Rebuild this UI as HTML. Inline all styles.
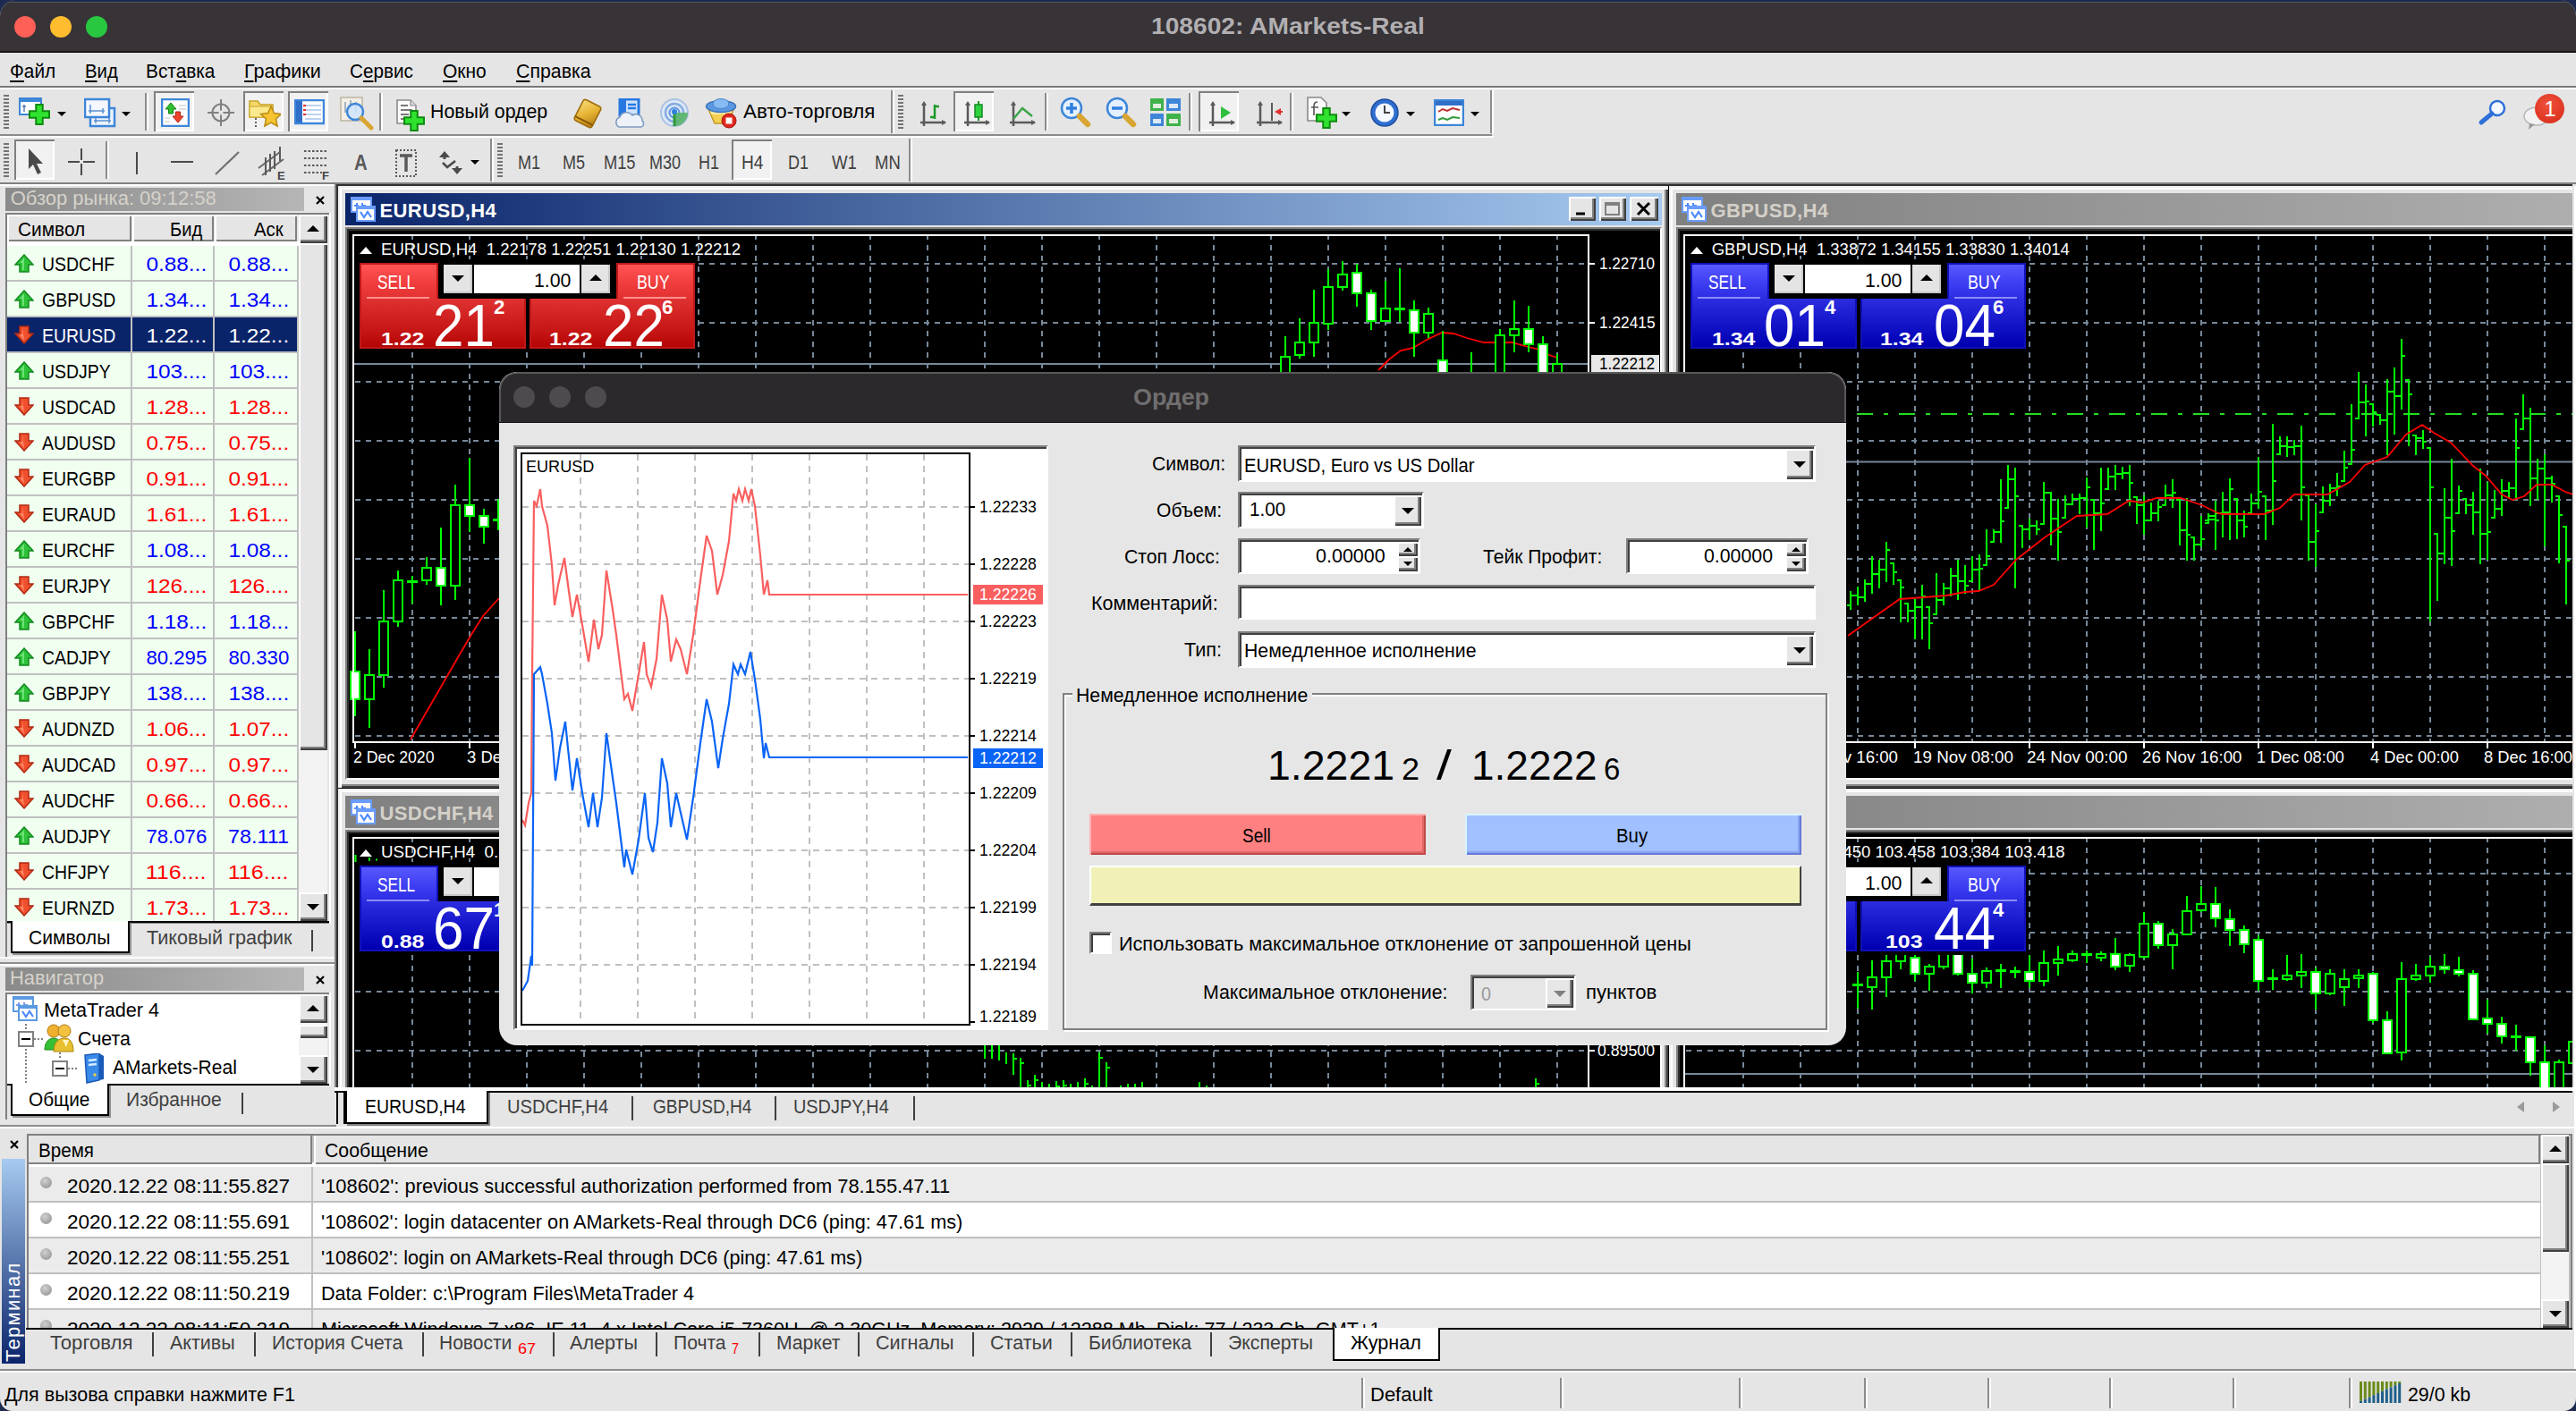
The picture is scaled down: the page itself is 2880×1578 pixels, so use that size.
<!DOCTYPE html>
<html><head><meta charset="utf-8"><title>108602: AMarkets-Real</title>
<style>
html,body{margin:0;padding:0;}
body{width:2880px;height:1578px;background:#1c2a50;overflow:hidden;font-family:"Liberation Sans",sans-serif;}
#win{position:absolute;left:0;top:0;width:2880px;height:1578px;background:#e5e5e5;border-radius:18px 18px 14px 14px;overflow:hidden;}
#win div,#win span.t,#win svg{position:absolute;box-sizing:border-box;}
span.t{white-space:pre;}
</style></head><body><div id="win">
<div style="left:0px;top:0px;width:2880px;height:57px;background:#373337;"></div>
<div style="left:0px;top:0px;width:2880px;height:2px;background:#1c2a50;"></div>
<div style="left:0px;top:2px;width:2880px;height:1px;background:#5a585a;"></div>
<div style="left:0px;top:57px;width:2880px;height:2px;background:#161416;"></div>
<div style="left:16px;top:18px;width:24px;height:24px;background:#fe5f57;border-radius:50%;"></div>
<div style="left:56px;top:18px;width:24px;height:24px;background:#febc2e;border-radius:50%;"></div>
<div style="left:96px;top:18px;width:24px;height:24px;background:#28c840;border-radius:50%;"></div>
<span class="t" style="top:15.5px;font-size:26px;line-height:26px;color:#b1afb1;font-weight:bold;transform:scaleX(1.083);transform-origin:0 0;left:1286.6px;">108602: AMarkets-Real</span>
<span class="t" style="top:69.4px;font-size:22px;line-height:22px;color:#000;transform:scaleX(0.947);transform-origin:0 0;left:11.2px;text-underline-offset:3px;"><u>Ф</u>айл</span>
<span class="t" style="top:69.4px;font-size:22px;line-height:22px;color:#000;transform:scaleX(0.923);transform-origin:0 0;left:95.0px;text-underline-offset:3px;"><u>В</u>ид</span>
<span class="t" style="top:69.4px;font-size:22px;line-height:22px;color:#000;transform:scaleX(0.947);transform-origin:0 0;left:163.0px;text-underline-offset:3px;">Вст<u>а</u>вка</span>
<span class="t" style="top:69.4px;font-size:22px;line-height:22px;color:#000;transform:scaleX(0.981);transform-origin:0 0;left:273.0px;text-underline-offset:3px;"><u>Г</u>рафики</span>
<span class="t" style="top:69.4px;font-size:22px;line-height:22px;color:#000;transform:scaleX(0.939);transform-origin:0 0;left:391.2px;text-underline-offset:3px;">С<u>е</u>рвис</span>
<span class="t" style="top:69.4px;font-size:22px;line-height:22px;color:#000;transform:scaleX(0.953);transform-origin:0 0;left:495.0px;text-underline-offset:3px;"><u>О</u>кно</span>
<span class="t" style="top:69.4px;font-size:22px;line-height:22px;color:#000;transform:scaleX(0.969);transform-origin:0 0;left:577.0px;text-underline-offset:3px;"><u>С</u>правка</span>
<div style="left:0px;top:96px;width:2880px;height:2px;background:#787878;"></div>
<div style="left:0px;top:98px;width:2880px;height:2px;background:#fff;"></div>
<div style="left:0px;top:150px;width:1668px;height:2px;background:#8a8a8a;"></div>
<div style="left:0px;top:152px;width:1670px;height:2px;background:#fff;"></div>
<div style="left:0px;top:204px;width:2880px;height:2px;background:#808080;"></div>
<div style="left:0px;top:206px;width:374px;height:2px;background:#fff;"></div>
<div style="left:4px;top:106px;width:6px;height:38px;background:repeating-linear-gradient(to bottom,#737373 0 2px,transparent 2px 4px);"></div>
<div style="left:996px;top:101px;width:2px;height:48px;background:#8c8c8c;"></div>
<div style="left:998px;top:101px;width:2px;height:48px;background:#fff;"></div>
<div style="left:1666px;top:101px;width:2px;height:48px;background:#8c8c8c;"></div>
<div style="left:1668px;top:101px;width:2px;height:48px;background:#fff;"></div>
<div style="left:1004px;top:106px;width:6px;height:38px;background:repeating-linear-gradient(to bottom,#737373 0 2px,transparent 2px 4px);"></div>
<svg style="left:21px;top:109px;" width="36" height="32" viewBox="0 0 36 32"><rect x="1" y="1" width="24" height="18" fill="#fff" stroke="#3d86d8" stroke-width="2"/><rect x="1" y="1" width="24" height="4" fill="#3d86d8"/><path d="M6 8v8M4 10h4" stroke="#5a7fb0" stroke-width="1.5"/><path d="M23 7v24M11 19h24" stroke="#0f8a0f" stroke-width="9.5"/><path d="M23 9v20M13 19h20" stroke="#2fe22f" stroke-width="5.5"/></svg>
<svg style="left:64px;top:124.5px;" width="10" height="6" viewBox="0 0 10 6"><path d="M0 0H10L5 5Z" fill="#000"/></svg>
<svg style="left:94px;top:109px;" width="36" height="34" viewBox="0 0 36 34"><rect x="7" y="12" width="27" height="20" fill="#eef4fc" stroke="#3d86d8" stroke-width="2.5"/><path d="M11 26h19M13 23v6M28 23v6" stroke="#5a8fd0" stroke-width="1.5"/><rect x="1" y="2" width="27" height="20" fill="#f4f8fe" stroke="#3d86d8" stroke-width="2.5"/><path d="M5 15h18M7 8v10M21 12v6" stroke="#5a8fd0" stroke-width="1.5"/></svg>
<svg style="left:136px;top:124.5px;" width="10" height="6" viewBox="0 0 10 6"><path d="M0 0H10L5 5Z" fill="#000"/></svg>
<div style="left:162px;top:104px;width:2px;height:42px;background:#8c8c8c;"></div>
<div style="left:164px;top:104px;width:2px;height:42px;background:#fff;"></div>
<div style="left:172px;top:102px;width:45px;height:45px;background:#f1f1f1;box-shadow:inset 2px 2px 0 #808080, inset -2px -2px 0 #fff;"></div>
<svg style="left:180px;top:110px;" width="32" height="32" viewBox="0 0 32 32"><rect x="1" y="1" width="30" height="30" fill="#fdfdfd" stroke="#3d86d8" stroke-width="2.5"/><path d="M11 5l-6 7h3.5v5h5v-5H17z" fill="#2fbf2f" stroke="#128012" stroke-width="1"/><path d="M19 27l-6-7h3.5v-5h5v5H25z" fill="#f0442a" stroke="#b02010" stroke-width="1"/><path d="M20 8h8M20 12h8M4 22h6M4 26h6" stroke="#d8d8d8" stroke-width="1.5"/></svg>
<svg style="left:232px;top:111px;" width="30" height="30" viewBox="0 0 30 30"><circle cx="15" cy="15" r="9.5" fill="none" stroke="#808080" stroke-width="2.2"/><path d="M15 0v30M0 15h30" stroke="#808080" stroke-width="2"/><circle cx="15" cy="15" r="2.5" fill="#e5e5e5"/></svg>
<div style="left:272px;top:102px;width:45px;height:45px;background:#f1f1f1;box-shadow:inset 2px 2px 0 #808080, inset -2px -2px 0 #fff;"></div>
<svg style="left:278px;top:107px;" width="36" height="36" viewBox="0 0 36 36"><path d="M1 6h9l3 4h14v14H1z" fill="#f4d96a" stroke="#c9a227" stroke-width="1.5"/><path d="M1 12h26v12H1z" fill="#fbe98e" stroke="#c9a227" stroke-width="1"/><path d="M8 25v10" stroke="#333" stroke-width="1.5" stroke-dasharray="2 2"/><path d="M25 12l3.5 7.5 8 1-6 5.5 1.6 8L25 30l-7.1 4 1.6-8-6-5.5 8-1z" fill="#f6c431" stroke="#b98a12" stroke-width="1.5"/></svg>
<div style="left:322px;top:102px;width:45px;height:45px;background:#f1f1f1;box-shadow:inset 2px 2px 0 #808080, inset -2px -2px 0 #fff;"></div>
<svg style="left:329px;top:111px;" width="34" height="30" viewBox="0 0 34 30"><rect x="1" y="1" width="32" height="26" fill="#fff" stroke="#3d86d8" stroke-width="2.5"/><rect x="2" y="2" width="7" height="24" fill="#2f6fc8"/><path d="M12 7h18M12 12h18M12 17h18M12 22h18" stroke="#a9c4ec" stroke-width="1.5"/><path d="M10 7h3M10 12h3M10 17h3" stroke="#e03030" stroke-width="2"/></svg>
<svg style="left:380px;top:108px;" width="38" height="38" viewBox="0 0 38 38"><rect x="1" y="1" width="24" height="26" fill="#f3efe6" stroke="#bdb5a2" stroke-width="1.5"/><path d="M6 6v12M12 4v10M18 6v12" stroke="#8aa0b8" stroke-width="1.5"/><circle cx="17" cy="17" r="9" fill="#cfe4fb" fill-opacity=".85" stroke="#3d86d8" stroke-width="2.5"/><path d="M24 24l11 11" stroke="#d9a532" stroke-width="5" stroke-linecap="round"/></svg>
<div style="left:424px;top:104px;width:2px;height:42px;background:#8c8c8c;"></div>
<div style="left:426px;top:104px;width:2px;height:42px;background:#fff;"></div>
<svg style="left:443px;top:109px;" width="36" height="38" viewBox="0 0 36 38"><path d="M1 3h15l6 6v20H1z" fill="#fbfbfb" stroke="#8a8a8a" stroke-width="1.6"/><path d="M16 3v6h6" fill="#ddd" stroke="#8a8a8a" stroke-width="1.2"/><path d="M5 9h8M5 14h13M5 19h9M5 24h6" stroke="#7a7a7a" stroke-width="2.2"/><path d="M20 14v24M8 26h24" stroke="#0f8a0f" stroke-width="9.5"/><path d="M20 16v20M10 26h20" stroke="#2fe22f" stroke-width="5.5"/></svg>
<span class="t" style="top:114.4px;font-size:22px;line-height:22px;color:#000;transform:scaleX(0.970);transform-origin:0 0;left:481.2px;">Новый ордер</span>
<svg style="left:640px;top:110px;" width="36" height="34" viewBox="0 0 36 34"><defs><linearGradient id="gg" x1="0" y1="0" x2="1" y2="1"><stop offset="0" stop-color="#f7dc7a"/><stop offset=".5" stop-color="#e6b435"/><stop offset="1" stop-color="#b27a10"/></linearGradient></defs><g transform="translate(17,17) rotate(27)"><rect x="-11" y="-13" width="22" height="26" rx="3" fill="url(#gg)" stroke="#a06c0e" stroke-width="1.6"/><path d="M-11 9l22 0" stroke="#8a5c08" stroke-width="2"/></g></svg>
<svg style="left:687px;top:110px;" width="36" height="34" viewBox="0 0 36 34"><rect x="6" y="1" width="21" height="18" fill="#cfe4ff" stroke="#2878e0" stroke-width="3"/><rect x="6" y="1" width="7" height="18" fill="#2878e0"/><path d="M15 7h9M15 11h9" stroke="#2878e0" stroke-width="2.4"/><path d="M5 32a6 6 0 0 1 1-11 8 8 0 0 1 14-2 7 7 0 0 1 11 6 4 4 0 0 1-1 7z" fill="#edf2f8" stroke="#7f9cc0" stroke-width="1.6"/></svg>
<svg style="left:737px;top:109px;" width="36" height="34" viewBox="0 0 36 34"><circle cx="17" cy="17" r="15" fill="#dfe9f6" stroke="#a9c2e4" stroke-width="2"/><circle cx="17" cy="17" r="10" fill="none" stroke="#86aee2" stroke-width="2.5"/><circle cx="17" cy="17" r="5.5" fill="none" stroke="#5a94e0" stroke-width="2"/><path d="M18 17h14a15 15 0 0 1-14 15z" fill="#58b468" fill-opacity=".9"/><path d="M17 17v15" stroke="#2c9a3a" stroke-width="3"/><circle cx="17" cy="16" r="3" fill="#2f7fe0"/></svg>
<svg style="left:789px;top:109px;" width="38" height="36" viewBox="0 0 38 36"><path d="M3 13h28l-5 16H10z" fill="#f3d052" stroke="#c59a20" stroke-width="1.5"/><path d="M5 15h24l-1 4H6z" fill="#fbe9a0"/><ellipse cx="17" cy="10" rx="16.5" ry="6.5" fill="#5a98e2" stroke="#3a70b8" stroke-width="1.5"/><ellipse cx="17" cy="7" rx="9" ry="5.5" fill="#86bbf4" stroke="#4a84cc" stroke-width="1"/><circle cx="26" cy="26" r="8" fill="#e0281e" stroke="#a81810" stroke-width="1"/><rect x="22.5" y="22.5" width="7" height="7" fill="#fff"/></svg>
<span class="t" style="top:114.4px;font-size:22px;line-height:22px;color:#000;transform:scaleX(1.015);transform-origin:0 0;left:831.2px;">Авто-торговля</span>
<svg style="left:1028px;top:113px;" width="32" height="30" viewBox="0 0 32 30"><path d="M5 2v26M1 24h28" stroke="#5a5a5a" stroke-width="2.5" fill="none"/><path d="M5 0l-3 5h6zM30 24l-5-3v6z" fill="#5a5a5a"/><path d="M17 4v16M17 6h5M12 18h5" stroke="#1a9a2a" stroke-width="2.5" fill="none"/></svg>
<div style="left:1066px;top:102px;width:45px;height:45px;background:#f1f1f1;box-shadow:inset 2px 2px 0 #808080, inset -2px -2px 0 #fff;"></div>
<svg style="left:1077px;top:113px;" width="32" height="30" viewBox="0 0 32 30"><path d="M5 2v26M1 24h28" stroke="#5a5a5a" stroke-width="2.5" fill="none"/><path d="M5 0l-3 5h6zM30 24l-5-3v6z" fill="#5a5a5a"/><path d="M17 0v22" stroke="#1a9a2a" stroke-width="2"/><rect x="13" y="4" width="8" height="14" fill="#2fd03f" stroke="#128a22" stroke-width="1.5"/></svg>
<svg style="left:1128px;top:113px;" width="32" height="30" viewBox="0 0 32 30"><path d="M5 2v26M1 24h28" stroke="#5a5a5a" stroke-width="2.5" fill="none"/><path d="M5 0l-3 5h6zM30 24l-5-3v6z" fill="#5a5a5a"/><path d="M5 20l10-12 11 9" stroke="#3aa64a" stroke-width="2.5" fill="none"/></svg>
<div style="left:1168px;top:104px;width:2px;height:42px;background:#8c8c8c;"></div>
<div style="left:1170px;top:104px;width:2px;height:42px;background:#fff;"></div>
<svg style="left:1185px;top:108px;" width="36" height="36" viewBox="0 0 36 36"><circle cx="13" cy="13" r="11" fill="#e4f0ff" stroke="#3d86d8" stroke-width="2.5"/><path d="M7 13h12" stroke="#2f7fe0" stroke-width="3.5"/><path d="M13 7v12" stroke="#2f7fe0" stroke-width="3.5"/><path d="M22 22l9 9" stroke="#d9a532" stroke-width="6.5" stroke-linecap="round"/></svg>
<svg style="left:1236px;top:108px;" width="36" height="36" viewBox="0 0 36 36"><circle cx="13" cy="13" r="11" fill="#e4f0ff" stroke="#3d86d8" stroke-width="2.5"/><path d="M7 13h12" stroke="#2f7fe0" stroke-width="3.5"/><path d="M22 22l9 9" stroke="#d9a532" stroke-width="6.5" stroke-linecap="round"/></svg>
<svg style="left:1286px;top:110px;" width="34" height="32" viewBox="0 0 34 32"><rect x="0" y="0" width="15" height="14" fill="#3fb24a"/><rect x="18" y="0" width="16" height="14" fill="#3d86d8"/><rect x="0" y="17" width="15" height="14" fill="#3d86d8"/><rect x="18" y="17" width="16" height="14" fill="#3fb24a"/><rect x="3" y="6" width="9" height="5" fill="#dff0df"/><rect x="21" y="6" width="10" height="5" fill="#dce9fb"/><rect x="3" y="23" width="9" height="5" fill="#dce9fb"/><rect x="21" y="23" width="10" height="5" fill="#dff0df"/></svg>
<div style="left:1329px;top:104px;width:2px;height:42px;background:#8c8c8c;"></div>
<div style="left:1331px;top:104px;width:2px;height:42px;background:#fff;"></div>
<div style="left:1340px;top:102px;width:45px;height:45px;background:#f1f1f1;box-shadow:inset 2px 2px 0 #808080, inset -2px -2px 0 #fff;"></div>
<svg style="left:1351px;top:113px;" width="32" height="30" viewBox="0 0 32 30"><path d="M5 2v26M1 24h28" stroke="#5a5a5a" stroke-width="2.5" fill="none"/><path d="M5 0l-3 5h6zM30 24l-5-3v6z" fill="#5a5a5a"/><path d="M14 6v14l11-7z" fill="#2fbf3f"/></svg>
<svg style="left:1404px;top:113px;" width="32" height="30" viewBox="0 0 32 30"><path d="M5 2v26M1 24h28" stroke="#5a5a5a" stroke-width="2.5" fill="none"/><path d="M5 0l-3 5h6zM30 24l-5-3v6z" fill="#5a5a5a"/><path d="M18 2v20" stroke="#5a5a5a" stroke-width="2"/><path d="M21 12l7-4v8z" fill="#e03030"/><path d="M24 12h6" stroke="#e03030" stroke-width="2"/></svg>
<div style="left:1442px;top:104px;width:2px;height:42px;background:#8c8c8c;"></div>
<div style="left:1444px;top:104px;width:2px;height:42px;background:#fff;"></div>
<svg style="left:1461px;top:108px;" width="36" height="38" viewBox="0 0 36 38"><path d="M1 1h15l6 6v20H1z" fill="#fbfbfb" stroke="#8a8a8a" stroke-width="1.6"/><path d="M12 6c-4 0-4 3-4 6v9M5 12h8" stroke="#555" stroke-width="1.6" fill="none"/><path d="M22 12v24M10 24h24" stroke="#0f8a0f" stroke-width="9.5"/><path d="M22 14v20M12 24h20" stroke="#2fe22f" stroke-width="5.5"/></svg>
<svg style="left:1500px;top:124.5px;" width="10" height="6" viewBox="0 0 10 6"><path d="M0 0H10L5 5Z" fill="#000"/></svg>
<svg style="left:1531px;top:109px;" width="34" height="34" viewBox="0 0 34 34"><circle cx="17" cy="17" r="15" fill="#2f6fd0" stroke="#1d4fa0" stroke-width="1.5"/><circle cx="17" cy="17" r="10.5" fill="#f4f8ff"/><path d="M17 9v8h6" stroke="#444" stroke-width="2" fill="none"/></svg>
<svg style="left:1572px;top:124.5px;" width="10" height="6" viewBox="0 0 10 6"><path d="M0 0H10L5 5Z" fill="#000"/></svg>
<svg style="left:1603px;top:111px;" width="34" height="30" viewBox="0 0 34 30"><rect x="1" y="1" width="32" height="28" fill="#fff" stroke="#3d86d8" stroke-width="2.5"/><rect x="2" y="2" width="30" height="5" fill="#2f6fc8"/><path d="M5 14l5-3 5 2 6-3 8 2" stroke="#c03030" stroke-width="2" fill="none"/><path d="M5 23l5-2 5 2 6-3 8 1" stroke="#2f9a3a" stroke-width="2" fill="none"/></svg>
<svg style="left:1644px;top:124.5px;" width="10" height="6" viewBox="0 0 10 6"><path d="M0 0H10L5 5Z" fill="#000"/></svg>
<svg style="left:2770px;top:110px;" width="34" height="32" viewBox="0 0 34 32"><circle cx="22" cy="11" r="8" fill="#f4f8ff" stroke="#2f6fd8" stroke-width="2.5"/><path d="M16 17L4 27" stroke="#2f6fd8" stroke-width="5" stroke-linecap="round"/></svg>
<svg style="left:2820px;top:118px;" width="36" height="30" viewBox="0 0 36 30"><ellipse cx="16" cy="12" rx="14" ry="10" fill="#f2f2f2" stroke="#b8b8b8" stroke-width="1.5"/><path d="M8 20l-1 7 7-6z" fill="#9a9a9a"/></svg>
<div style="left:2834px;top:105px;width:33px;height:33px;background:radial-gradient(circle at 45% 35%,#f0523c,#d42a18);border-radius:50%;"></div>
<span class="t" style="top:110.2px;font-size:24px;line-height:24px;color:#fff;transform:scaleX(0.980);transform-origin:50% 0;left:2450.5px;width:800px;text-align:center;">1</span>
<div style="left:4px;top:160px;width:6px;height:38px;background:repeating-linear-gradient(to bottom,#737373 0 2px,transparent 2px 4px);"></div>
<div style="left:16px;top:156px;width:45px;height:45px;background:#f1f1f1;box-shadow:inset 2px 2px 0 #808080, inset -2px -2px 0 #fff;"></div>
<svg style="left:30px;top:166px;" width="22" height="30" viewBox="0 0 22 30"><path d="M2 0v23l5-5 5 11 4-2-5-10h7z" fill="#4a4a4a"/></svg>
<svg style="left:76px;top:166px;" width="30" height="30" viewBox="0 0 30 30"><path d="M15 0v30M0 15h30" stroke="#4a4a4a" stroke-width="2"/><rect x="13" y="13" width="4" height="4" fill="#e5e5e5"/></svg>
<div style="left:118px;top:158px;width:2px;height:42px;background:#8c8c8c;"></div>
<div style="left:120px;top:158px;width:2px;height:42px;background:#fff;"></div>
<div style="left:152px;top:170px;width:2px;height:25px;background:#4a4a4a;"></div>
<div style="left:191px;top:180px;width:25px;height:2px;background:#4a4a4a;"></div>
<svg style="left:240px;top:168px;" width="28" height="28" viewBox="0 0 28 28"><path d="M1 27L27 2" stroke="#707070" stroke-width="2.2"/></svg>
<svg style="left:287px;top:164px;" width="34" height="38" viewBox="0 0 34 38"><path d="M2 24L26 6M6 32L30 14" stroke="#6a6a6a" stroke-width="2"/><path d="M10 12v20M15 8v20M20 5v20M26 0v16" stroke="#5a5a5a" stroke-width="2"/><text x="23" y="37" font-size="13" font-weight="bold" fill="#444" font-family="Liberation Sans">E</text></svg>
<svg style="left:340px;top:166px;" width="32" height="36" viewBox="0 0 32 36"><path d="M0 3h26M0 11h26M0 19h26M0 27h20" stroke="#5a5a5a" stroke-width="2" stroke-dasharray="2.5 2"/><text x="20" y="35" font-size="13" font-weight="bold" fill="#444" font-family="Liberation Sans">F</text></svg>
<span class="t" style="top:171.0px;font-size:23px;line-height:23px;color:#5a5a5a;font-weight:bold;transform:scaleX(0.885);transform-origin:0 0;left:396.0px;">A</span>
<svg style="left:441px;top:165px;" width="26" height="34" viewBox="0 0 26 34"><rect x="2" y="3" width="22" height="29" fill="none" stroke="#5a5a5a" stroke-width="2" stroke-dasharray="2 2"/><path d="M6 9h14M13 9v18" stroke="#5a5a5a" stroke-width="3.5"/></svg>
<svg style="left:489px;top:168px;" width="32" height="28" viewBox="0 0 32 28"><path d="M8 1l6 7H2zM22 27l-6-7h12z" fill="#4a4a4a"/><path d="M8 8v2M22 20v-2" stroke="#4a4a4a" stroke-width="3"/><path d="M6 14l5 5 9-7" stroke="#4a4a4a" stroke-width="2.6" fill="none"/></svg>
<svg style="left:526px;top:178.5px;" width="10" height="6" viewBox="0 0 10 6"><path d="M0 0H10L5 5Z" fill="#000"/></svg>
<div style="left:548px;top:155px;width:2px;height:48px;background:#8c8c8c;"></div>
<div style="left:550px;top:155px;width:2px;height:48px;background:#fff;"></div>
<div style="left:556px;top:160px;width:6px;height:38px;background:repeating-linear-gradient(to bottom,#737373 0 2px,transparent 2px 4px);"></div>
<div style="left:818px;top:156px;width:45px;height:45px;background:#f1f1f1;box-shadow:inset 2px 2px 0 #808080, inset -2px -2px 0 #fff;"></div>
<span class="t" style="top:170.9px;font-size:22px;line-height:22px;color:#404040;transform:scaleX(0.824);transform-origin:0 0;left:578.5px;">M1</span>
<span class="t" style="top:170.9px;font-size:22px;line-height:22px;color:#404040;transform:scaleX(0.818);transform-origin:0 0;left:629.0px;">M5</span>
<span class="t" style="top:170.9px;font-size:22px;line-height:22px;color:#404040;transform:scaleX(0.830);transform-origin:0 0;left:675.0px;">M15</span>
<span class="t" style="top:170.9px;font-size:22px;line-height:22px;color:#404040;transform:scaleX(0.818);transform-origin:0 0;left:725.5px;">M30</span>
<span class="t" style="top:170.9px;font-size:22px;line-height:22px;color:#404040;transform:scaleX(0.817);transform-origin:0 0;left:781.2px;">H1</span>
<span class="t" style="top:170.9px;font-size:22px;line-height:22px;color:#404040;transform:scaleX(0.870);transform-origin:0 0;left:829.2px;">H4</span>
<span class="t" style="top:170.9px;font-size:22px;line-height:22px;color:#404040;transform:scaleX(0.817);transform-origin:0 0;left:881.2px;">D1</span>
<span class="t" style="top:170.9px;font-size:22px;line-height:22px;color:#404040;transform:scaleX(0.848);transform-origin:0 0;left:930.0px;">W1</span>
<span class="t" style="top:170.9px;font-size:22px;line-height:22px;color:#404040;transform:scaleX(0.840);transform-origin:0 0;left:977.5px;">MN</span>
<div style="left:1016px;top:155px;width:2px;height:48px;background:#8c8c8c;"></div>
<div style="left:1018px;top:155px;width:2px;height:48px;background:#fff;"></div>
<div style="left:0px;top:1531px;width:2880px;height:2px;background:#8c8c8c;"></div>
<div style="left:0px;top:1533px;width:2880px;height:2px;background:#fff;"></div>
<span class="t" style="top:1549.4px;font-size:22px;line-height:22px;color:#000;transform:scaleX(0.977);transform-origin:0 0;left:5.0px;">Для вызова справки нажмите F1</span>
<div style="left:1522px;top:1541px;width:2px;height:34px;background:#8c8c8c;"></div>
<div style="left:1524px;top:1541px;width:2px;height:34px;background:#fff;"></div>
<div style="left:1744px;top:1541px;width:2px;height:34px;background:#8c8c8c;"></div>
<div style="left:1746px;top:1541px;width:2px;height:34px;background:#fff;"></div>
<div style="left:1944px;top:1541px;width:2px;height:34px;background:#8c8c8c;"></div>
<div style="left:1946px;top:1541px;width:2px;height:34px;background:#fff;"></div>
<div style="left:2084px;top:1541px;width:2px;height:34px;background:#8c8c8c;"></div>
<div style="left:2086px;top:1541px;width:2px;height:34px;background:#fff;"></div>
<div style="left:2222px;top:1541px;width:2px;height:34px;background:#8c8c8c;"></div>
<div style="left:2224px;top:1541px;width:2px;height:34px;background:#fff;"></div>
<div style="left:2358px;top:1541px;width:2px;height:34px;background:#8c8c8c;"></div>
<div style="left:2360px;top:1541px;width:2px;height:34px;background:#fff;"></div>
<div style="left:2496px;top:1541px;width:2px;height:34px;background:#8c8c8c;"></div>
<div style="left:2498px;top:1541px;width:2px;height:34px;background:#fff;"></div>
<div style="left:2626px;top:1541px;width:2px;height:34px;background:#8c8c8c;"></div>
<div style="left:2628px;top:1541px;width:2px;height:34px;background:#fff;"></div>
<span class="t" style="top:1549.4px;font-size:22px;line-height:22px;color:#000;left:1532.0px;">Default</span>
<svg style="left:2638px;top:1545px;" width="48" height="24" viewBox="0 0 48 24"><rect x="0.0" y="0" width="3" height="21.8" fill="#6a8a1a"/><rect x="0.0" y="21.8" width="3" height="2.2" fill="#1f5f8a"/><rect x="4.8" y="0" width="3" height="19.6" fill="#6a8a1a"/><rect x="4.8" y="19.6" width="3" height="4.4" fill="#1f5f8a"/><rect x="9.6" y="0" width="3" height="17.4" fill="#6a8a1a"/><rect x="9.6" y="17.4" width="3" height="6.6" fill="#1f5f8a"/><rect x="14.4" y="0" width="3" height="15.2" fill="#6a8a1a"/><rect x="14.4" y="15.2" width="3" height="8.8" fill="#1f5f8a"/><rect x="19.2" y="0" width="3" height="13.0" fill="#6a8a1a"/><rect x="19.2" y="13.0" width="3" height="11.0" fill="#1f5f8a"/><rect x="24.0" y="0" width="3" height="10.8" fill="#6a8a1a"/><rect x="24.0" y="10.8" width="3" height="13.2" fill="#1f5f8a"/><rect x="28.8" y="0" width="3" height="8.6" fill="#6a8a1a"/><rect x="28.8" y="8.6" width="3" height="15.4" fill="#1f5f8a"/><rect x="33.6" y="0" width="3" height="6.4" fill="#6a8a1a"/><rect x="33.6" y="6.4" width="3" height="17.6" fill="#1f5f8a"/><rect x="38.4" y="0" width="3" height="4.2" fill="#6a8a1a"/><rect x="38.4" y="4.2" width="3" height="19.8" fill="#1f5f8a"/><rect x="43.2" y="0" width="3" height="2.0" fill="#6a8a1a"/><rect x="43.2" y="2.0" width="3" height="22.0" fill="#1f5f8a"/></svg>
<span class="t" style="top:1549.4px;font-size:22px;line-height:22px;color:#000;transform:scaleX(0.970);transform-origin:0 0;left:2692.0px;">29/0 kb</span>
<div style="left:6px;top:210px;width:334px;height:26px;background:linear-gradient(to right,#8a8a8a,#b6b6b6);"></div>
<span class="t" style="top:211.4px;font-size:22px;line-height:22px;color:#d6d2ca;left:11.7px;">Обзор рынка: 09:12:58</span>
<svg style="left:353px;top:219px;" width="10" height="10" viewBox="0 0 10 10"><path d="M1 1l8 8M9 1L1 9" stroke="#000" stroke-width="2.2"/></svg>
<div style="left:6px;top:238px;width:364px;height:795px;background:#808080;border-right:2px solid #fff;"></div>
<div style="left:8px;top:240px;width:360px;height:791px;background:#e5e5e5;"></div>
<div style="left:8px;top:240px;width:139px;height:30px;background:#e5e5e5;box-shadow:inset 2px 2px 0 #fff, inset -2px -2px 0 #808080;"></div>
<div style="left:148px;top:240px;width:91px;height:30px;background:#e5e5e5;box-shadow:inset 2px 2px 0 #fff, inset -2px -2px 0 #808080;"></div>
<div style="left:240px;top:240px;width:92px;height:30px;background:#e5e5e5;box-shadow:inset 2px 2px 0 #fff, inset -2px -2px 0 #808080;"></div>
<span class="t" style="top:245.9px;font-size:22px;line-height:22px;color:#000;transform:scaleX(0.948);transform-origin:0 0;left:19.5px;">Символ</span>
<span class="t" style="top:245.9px;font-size:22px;line-height:22px;color:#000;transform:scaleX(0.914);transform-origin:0 0;left:189.5px;">Бид</span>
<span class="t" style="top:245.9px;font-size:22px;line-height:22px;color:#000;transform:scaleX(0.926);transform-origin:0 0;left:283.8px;">Аск</span>
<div style="left:8px;top:270px;width:326px;height:5px;background:#fff;"></div>
<div style="left:8px;top:275px;width:326px;height:756px;background:#c0c0c0;"></div>
<div style="left:8px;top:275px;width:138px;height:38px;background:#f0fff0;"></div>
<div style="left:148px;top:275px;width:90px;height:38px;background:#f0fff0;"></div>
<div style="left:240px;top:275px;width:92px;height:38px;background:#f0fff0;"></div>
<svg style="left:16px;top:284px;" width="22" height="21" viewBox="0 0 22 21"><path d="M11 1L1 12h5v8h10v-8h5z" fill="#2ec23a" stroke="#128a1e" stroke-width="1.5"/><path d="M11 4l-5 6h3v8h2z" fill="#8af08f" fill-opacity=".7"/></svg>
<span class="t" style="top:285.4px;font-size:22px;line-height:22px;color:#000;transform:scaleX(0.885);transform-origin:0 0;left:47.0px;">USDCHF</span>
<span class="t" style="top:285.4px;font-size:22px;line-height:22px;color:#0000ff;transform:scaleX(1.108);transform-origin:100% 0;right:2649.0px;">0.88...</span>
<span class="t" style="top:285.4px;font-size:22px;line-height:22px;color:#0000ff;transform:scaleX(1.108);transform-origin:100% 0;right:2557.0px;">0.88...</span>
<div style="left:8px;top:315px;width:138px;height:38px;background:#f0fff0;"></div>
<div style="left:148px;top:315px;width:90px;height:38px;background:#f0fff0;"></div>
<div style="left:240px;top:315px;width:92px;height:38px;background:#f0fff0;"></div>
<svg style="left:16px;top:324px;" width="22" height="21" viewBox="0 0 22 21"><path d="M11 1L1 12h5v8h10v-8h5z" fill="#2ec23a" stroke="#128a1e" stroke-width="1.5"/><path d="M11 4l-5 6h3v8h2z" fill="#8af08f" fill-opacity=".7"/></svg>
<span class="t" style="top:325.4px;font-size:22px;line-height:22px;color:#000;transform:scaleX(0.885);transform-origin:0 0;left:47.0px;">GBPUSD</span>
<span class="t" style="top:325.4px;font-size:22px;line-height:22px;color:#0000ff;transform:scaleX(1.108);transform-origin:100% 0;right:2649.0px;">1.34...</span>
<span class="t" style="top:325.4px;font-size:22px;line-height:22px;color:#0000ff;transform:scaleX(1.108);transform-origin:100% 0;right:2557.0px;">1.34...</span>
<div style="left:8px;top:355px;width:138px;height:38px;background:#0a246a;"></div>
<div style="left:148px;top:355px;width:90px;height:38px;background:#0a246a;"></div>
<div style="left:240px;top:355px;width:92px;height:38px;background:#0a246a;"></div>
<svg style="left:16px;top:364px;" width="22" height="21" viewBox="0 0 22 21"><path d="M11 20L1 9h5V1h10v8h5z" fill="#f0502e" stroke="#b02a12" stroke-width="1.5"/><path d="M9 2v8H6l5 7z" fill="#ffa080" fill-opacity=".7"/></svg>
<span class="t" style="top:365.4px;font-size:22px;line-height:22px;color:#fff;transform:scaleX(0.885);transform-origin:0 0;left:47.0px;">EURUSD</span>
<span class="t" style="top:365.4px;font-size:22px;line-height:22px;color:#fff;transform:scaleX(1.108);transform-origin:100% 0;right:2649.0px;">1.22...</span>
<span class="t" style="top:365.4px;font-size:22px;line-height:22px;color:#fff;transform:scaleX(1.108);transform-origin:100% 0;right:2557.0px;">1.22...</span>
<div style="left:8px;top:395px;width:138px;height:38px;background:#f0fff0;"></div>
<div style="left:148px;top:395px;width:90px;height:38px;background:#f0fff0;"></div>
<div style="left:240px;top:395px;width:92px;height:38px;background:#f0fff0;"></div>
<svg style="left:16px;top:404px;" width="22" height="21" viewBox="0 0 22 21"><path d="M11 1L1 12h5v8h10v-8h5z" fill="#2ec23a" stroke="#128a1e" stroke-width="1.5"/><path d="M11 4l-5 6h3v8h2z" fill="#8af08f" fill-opacity=".7"/></svg>
<span class="t" style="top:405.4px;font-size:22px;line-height:22px;color:#000;transform:scaleX(0.885);transform-origin:0 0;left:47.0px;">USDJPY</span>
<span class="t" style="top:405.4px;font-size:22px;line-height:22px;color:#0000ff;transform:scaleX(1.108);transform-origin:100% 0;right:2649.0px;">103....</span>
<span class="t" style="top:405.4px;font-size:22px;line-height:22px;color:#0000ff;transform:scaleX(1.108);transform-origin:100% 0;right:2557.0px;">103....</span>
<div style="left:8px;top:435px;width:138px;height:38px;background:#f0fff0;"></div>
<div style="left:148px;top:435px;width:90px;height:38px;background:#f0fff0;"></div>
<div style="left:240px;top:435px;width:92px;height:38px;background:#f0fff0;"></div>
<svg style="left:16px;top:444px;" width="22" height="21" viewBox="0 0 22 21"><path d="M11 20L1 9h5V1h10v8h5z" fill="#f0502e" stroke="#b02a12" stroke-width="1.5"/><path d="M9 2v8H6l5 7z" fill="#ffa080" fill-opacity=".7"/></svg>
<span class="t" style="top:445.4px;font-size:22px;line-height:22px;color:#000;transform:scaleX(0.885);transform-origin:0 0;left:47.0px;">USDCAD</span>
<span class="t" style="top:445.4px;font-size:22px;line-height:22px;color:#ff0000;transform:scaleX(1.108);transform-origin:100% 0;right:2649.0px;">1.28...</span>
<span class="t" style="top:445.4px;font-size:22px;line-height:22px;color:#ff0000;transform:scaleX(1.108);transform-origin:100% 0;right:2557.0px;">1.28...</span>
<div style="left:8px;top:475px;width:138px;height:38px;background:#f0fff0;"></div>
<div style="left:148px;top:475px;width:90px;height:38px;background:#f0fff0;"></div>
<div style="left:240px;top:475px;width:92px;height:38px;background:#f0fff0;"></div>
<svg style="left:16px;top:484px;" width="22" height="21" viewBox="0 0 22 21"><path d="M11 20L1 9h5V1h10v8h5z" fill="#f0502e" stroke="#b02a12" stroke-width="1.5"/><path d="M9 2v8H6l5 7z" fill="#ffa080" fill-opacity=".7"/></svg>
<span class="t" style="top:485.4px;font-size:22px;line-height:22px;color:#000;transform:scaleX(0.885);transform-origin:0 0;left:47.0px;">AUDUSD</span>
<span class="t" style="top:485.4px;font-size:22px;line-height:22px;color:#ff0000;transform:scaleX(1.108);transform-origin:100% 0;right:2649.0px;">0.75...</span>
<span class="t" style="top:485.4px;font-size:22px;line-height:22px;color:#ff0000;transform:scaleX(1.108);transform-origin:100% 0;right:2557.0px;">0.75...</span>
<div style="left:8px;top:515px;width:138px;height:38px;background:#f0fff0;"></div>
<div style="left:148px;top:515px;width:90px;height:38px;background:#f0fff0;"></div>
<div style="left:240px;top:515px;width:92px;height:38px;background:#f0fff0;"></div>
<svg style="left:16px;top:524px;" width="22" height="21" viewBox="0 0 22 21"><path d="M11 20L1 9h5V1h10v8h5z" fill="#f0502e" stroke="#b02a12" stroke-width="1.5"/><path d="M9 2v8H6l5 7z" fill="#ffa080" fill-opacity=".7"/></svg>
<span class="t" style="top:525.4px;font-size:22px;line-height:22px;color:#000;transform:scaleX(0.885);transform-origin:0 0;left:47.0px;">EURGBP</span>
<span class="t" style="top:525.4px;font-size:22px;line-height:22px;color:#ff0000;transform:scaleX(1.108);transform-origin:100% 0;right:2649.0px;">0.91...</span>
<span class="t" style="top:525.4px;font-size:22px;line-height:22px;color:#ff0000;transform:scaleX(1.108);transform-origin:100% 0;right:2557.0px;">0.91...</span>
<div style="left:8px;top:555px;width:138px;height:38px;background:#f0fff0;"></div>
<div style="left:148px;top:555px;width:90px;height:38px;background:#f0fff0;"></div>
<div style="left:240px;top:555px;width:92px;height:38px;background:#f0fff0;"></div>
<svg style="left:16px;top:564px;" width="22" height="21" viewBox="0 0 22 21"><path d="M11 20L1 9h5V1h10v8h5z" fill="#f0502e" stroke="#b02a12" stroke-width="1.5"/><path d="M9 2v8H6l5 7z" fill="#ffa080" fill-opacity=".7"/></svg>
<span class="t" style="top:565.4px;font-size:22px;line-height:22px;color:#000;transform:scaleX(0.885);transform-origin:0 0;left:47.0px;">EURAUD</span>
<span class="t" style="top:565.4px;font-size:22px;line-height:22px;color:#ff0000;transform:scaleX(1.108);transform-origin:100% 0;right:2649.0px;">1.61...</span>
<span class="t" style="top:565.4px;font-size:22px;line-height:22px;color:#ff0000;transform:scaleX(1.108);transform-origin:100% 0;right:2557.0px;">1.61...</span>
<div style="left:8px;top:595px;width:138px;height:38px;background:#f0fff0;"></div>
<div style="left:148px;top:595px;width:90px;height:38px;background:#f0fff0;"></div>
<div style="left:240px;top:595px;width:92px;height:38px;background:#f0fff0;"></div>
<svg style="left:16px;top:604px;" width="22" height="21" viewBox="0 0 22 21"><path d="M11 1L1 12h5v8h10v-8h5z" fill="#2ec23a" stroke="#128a1e" stroke-width="1.5"/><path d="M11 4l-5 6h3v8h2z" fill="#8af08f" fill-opacity=".7"/></svg>
<span class="t" style="top:605.4px;font-size:22px;line-height:22px;color:#000;transform:scaleX(0.885);transform-origin:0 0;left:47.0px;">EURCHF</span>
<span class="t" style="top:605.4px;font-size:22px;line-height:22px;color:#0000ff;transform:scaleX(1.108);transform-origin:100% 0;right:2649.0px;">1.08...</span>
<span class="t" style="top:605.4px;font-size:22px;line-height:22px;color:#0000ff;transform:scaleX(1.108);transform-origin:100% 0;right:2557.0px;">1.08...</span>
<div style="left:8px;top:635px;width:138px;height:38px;background:#f0fff0;"></div>
<div style="left:148px;top:635px;width:90px;height:38px;background:#f0fff0;"></div>
<div style="left:240px;top:635px;width:92px;height:38px;background:#f0fff0;"></div>
<svg style="left:16px;top:644px;" width="22" height="21" viewBox="0 0 22 21"><path d="M11 20L1 9h5V1h10v8h5z" fill="#f0502e" stroke="#b02a12" stroke-width="1.5"/><path d="M9 2v8H6l5 7z" fill="#ffa080" fill-opacity=".7"/></svg>
<span class="t" style="top:645.4px;font-size:22px;line-height:22px;color:#000;transform:scaleX(0.885);transform-origin:0 0;left:47.0px;">EURJPY</span>
<span class="t" style="top:645.4px;font-size:22px;line-height:22px;color:#ff0000;transform:scaleX(1.108);transform-origin:100% 0;right:2649.0px;">126....</span>
<span class="t" style="top:645.4px;font-size:22px;line-height:22px;color:#ff0000;transform:scaleX(1.108);transform-origin:100% 0;right:2557.0px;">126....</span>
<div style="left:8px;top:675px;width:138px;height:38px;background:#f0fff0;"></div>
<div style="left:148px;top:675px;width:90px;height:38px;background:#f0fff0;"></div>
<div style="left:240px;top:675px;width:92px;height:38px;background:#f0fff0;"></div>
<svg style="left:16px;top:684px;" width="22" height="21" viewBox="0 0 22 21"><path d="M11 1L1 12h5v8h10v-8h5z" fill="#2ec23a" stroke="#128a1e" stroke-width="1.5"/><path d="M11 4l-5 6h3v8h2z" fill="#8af08f" fill-opacity=".7"/></svg>
<span class="t" style="top:685.4px;font-size:22px;line-height:22px;color:#000;transform:scaleX(0.885);transform-origin:0 0;left:47.0px;">GBPCHF</span>
<span class="t" style="top:685.4px;font-size:22px;line-height:22px;color:#0000ff;transform:scaleX(1.108);transform-origin:100% 0;right:2649.0px;">1.18...</span>
<span class="t" style="top:685.4px;font-size:22px;line-height:22px;color:#0000ff;transform:scaleX(1.108);transform-origin:100% 0;right:2557.0px;">1.18...</span>
<div style="left:8px;top:715px;width:138px;height:38px;background:#f0fff0;"></div>
<div style="left:148px;top:715px;width:90px;height:38px;background:#f0fff0;"></div>
<div style="left:240px;top:715px;width:92px;height:38px;background:#f0fff0;"></div>
<svg style="left:16px;top:724px;" width="22" height="21" viewBox="0 0 22 21"><path d="M11 1L1 12h5v8h10v-8h5z" fill="#2ec23a" stroke="#128a1e" stroke-width="1.5"/><path d="M11 4l-5 6h3v8h2z" fill="#8af08f" fill-opacity=".7"/></svg>
<span class="t" style="top:725.4px;font-size:22px;line-height:22px;color:#000;transform:scaleX(0.885);transform-origin:0 0;left:47.0px;">CADJPY</span>
<span class="t" style="top:725.4px;font-size:22px;line-height:22px;color:#0000ff;transform:scaleX(1.009);transform-origin:100% 0;right:2649.0px;">80.295</span>
<span class="t" style="top:725.4px;font-size:22px;line-height:22px;color:#0000ff;transform:scaleX(1.009);transform-origin:100% 0;right:2557.0px;">80.330</span>
<div style="left:8px;top:755px;width:138px;height:38px;background:#f0fff0;"></div>
<div style="left:148px;top:755px;width:90px;height:38px;background:#f0fff0;"></div>
<div style="left:240px;top:755px;width:92px;height:38px;background:#f0fff0;"></div>
<svg style="left:16px;top:764px;" width="22" height="21" viewBox="0 0 22 21"><path d="M11 1L1 12h5v8h10v-8h5z" fill="#2ec23a" stroke="#128a1e" stroke-width="1.5"/><path d="M11 4l-5 6h3v8h2z" fill="#8af08f" fill-opacity=".7"/></svg>
<span class="t" style="top:765.4px;font-size:22px;line-height:22px;color:#000;transform:scaleX(0.885);transform-origin:0 0;left:47.0px;">GBPJPY</span>
<span class="t" style="top:765.4px;font-size:22px;line-height:22px;color:#0000ff;transform:scaleX(1.108);transform-origin:100% 0;right:2649.0px;">138....</span>
<span class="t" style="top:765.4px;font-size:22px;line-height:22px;color:#0000ff;transform:scaleX(1.108);transform-origin:100% 0;right:2557.0px;">138....</span>
<div style="left:8px;top:795px;width:138px;height:38px;background:#f0fff0;"></div>
<div style="left:148px;top:795px;width:90px;height:38px;background:#f0fff0;"></div>
<div style="left:240px;top:795px;width:92px;height:38px;background:#f0fff0;"></div>
<svg style="left:16px;top:804px;" width="22" height="21" viewBox="0 0 22 21"><path d="M11 20L1 9h5V1h10v8h5z" fill="#f0502e" stroke="#b02a12" stroke-width="1.5"/><path d="M9 2v8H6l5 7z" fill="#ffa080" fill-opacity=".7"/></svg>
<span class="t" style="top:805.4px;font-size:22px;line-height:22px;color:#000;transform:scaleX(0.885);transform-origin:0 0;left:47.0px;">AUDNZD</span>
<span class="t" style="top:805.4px;font-size:22px;line-height:22px;color:#ff0000;transform:scaleX(1.108);transform-origin:100% 0;right:2649.0px;">1.06...</span>
<span class="t" style="top:805.4px;font-size:22px;line-height:22px;color:#ff0000;transform:scaleX(1.108);transform-origin:100% 0;right:2557.0px;">1.07...</span>
<div style="left:8px;top:835px;width:138px;height:38px;background:#f0fff0;"></div>
<div style="left:148px;top:835px;width:90px;height:38px;background:#f0fff0;"></div>
<div style="left:240px;top:835px;width:92px;height:38px;background:#f0fff0;"></div>
<svg style="left:16px;top:844px;" width="22" height="21" viewBox="0 0 22 21"><path d="M11 20L1 9h5V1h10v8h5z" fill="#f0502e" stroke="#b02a12" stroke-width="1.5"/><path d="M9 2v8H6l5 7z" fill="#ffa080" fill-opacity=".7"/></svg>
<span class="t" style="top:845.4px;font-size:22px;line-height:22px;color:#000;transform:scaleX(0.885);transform-origin:0 0;left:47.0px;">AUDCAD</span>
<span class="t" style="top:845.4px;font-size:22px;line-height:22px;color:#ff0000;transform:scaleX(1.108);transform-origin:100% 0;right:2649.0px;">0.97...</span>
<span class="t" style="top:845.4px;font-size:22px;line-height:22px;color:#ff0000;transform:scaleX(1.108);transform-origin:100% 0;right:2557.0px;">0.97...</span>
<div style="left:8px;top:875px;width:138px;height:38px;background:#f0fff0;"></div>
<div style="left:148px;top:875px;width:90px;height:38px;background:#f0fff0;"></div>
<div style="left:240px;top:875px;width:92px;height:38px;background:#f0fff0;"></div>
<svg style="left:16px;top:884px;" width="22" height="21" viewBox="0 0 22 21"><path d="M11 20L1 9h5V1h10v8h5z" fill="#f0502e" stroke="#b02a12" stroke-width="1.5"/><path d="M9 2v8H6l5 7z" fill="#ffa080" fill-opacity=".7"/></svg>
<span class="t" style="top:885.4px;font-size:22px;line-height:22px;color:#000;transform:scaleX(0.885);transform-origin:0 0;left:47.0px;">AUDCHF</span>
<span class="t" style="top:885.4px;font-size:22px;line-height:22px;color:#ff0000;transform:scaleX(1.108);transform-origin:100% 0;right:2649.0px;">0.66...</span>
<span class="t" style="top:885.4px;font-size:22px;line-height:22px;color:#ff0000;transform:scaleX(1.108);transform-origin:100% 0;right:2557.0px;">0.66...</span>
<div style="left:8px;top:915px;width:138px;height:38px;background:#f0fff0;"></div>
<div style="left:148px;top:915px;width:90px;height:38px;background:#f0fff0;"></div>
<div style="left:240px;top:915px;width:92px;height:38px;background:#f0fff0;"></div>
<svg style="left:16px;top:924px;" width="22" height="21" viewBox="0 0 22 21"><path d="M11 1L1 12h5v8h10v-8h5z" fill="#2ec23a" stroke="#128a1e" stroke-width="1.5"/><path d="M11 4l-5 6h3v8h2z" fill="#8af08f" fill-opacity=".7"/></svg>
<span class="t" style="top:925.4px;font-size:22px;line-height:22px;color:#000;transform:scaleX(0.885);transform-origin:0 0;left:47.0px;">AUDJPY</span>
<span class="t" style="top:925.4px;font-size:22px;line-height:22px;color:#0000ff;transform:scaleX(1.009);transform-origin:100% 0;right:2649.0px;">78.076</span>
<span class="t" style="top:925.4px;font-size:22px;line-height:22px;color:#0000ff;transform:scaleX(1.061);transform-origin:100% 0;right:2557.0px;">78.111</span>
<div style="left:8px;top:955px;width:138px;height:38px;background:#f0fff0;"></div>
<div style="left:148px;top:955px;width:90px;height:38px;background:#f0fff0;"></div>
<div style="left:240px;top:955px;width:92px;height:38px;background:#f0fff0;"></div>
<svg style="left:16px;top:964px;" width="22" height="21" viewBox="0 0 22 21"><path d="M11 20L1 9h5V1h10v8h5z" fill="#f0502e" stroke="#b02a12" stroke-width="1.5"/><path d="M9 2v8H6l5 7z" fill="#ffa080" fill-opacity=".7"/></svg>
<span class="t" style="top:965.4px;font-size:22px;line-height:22px;color:#000;transform:scaleX(0.885);transform-origin:0 0;left:47.0px;">CHFJPY</span>
<span class="t" style="top:965.4px;font-size:22px;line-height:22px;color:#ff0000;transform:scaleX(1.138);transform-origin:100% 0;right:2649.0px;">116....</span>
<span class="t" style="top:965.4px;font-size:22px;line-height:22px;color:#ff0000;transform:scaleX(1.138);transform-origin:100% 0;right:2557.0px;">116....</span>
<div style="left:8px;top:995px;width:138px;height:35px;background:#f0fff0;"></div>
<div style="left:148px;top:995px;width:90px;height:35px;background:#f0fff0;"></div>
<div style="left:240px;top:995px;width:92px;height:35px;background:#f0fff0;"></div>
<svg style="left:16px;top:1004px;" width="22" height="21" viewBox="0 0 22 21"><path d="M11 20L1 9h5V1h10v8h5z" fill="#f0502e" stroke="#b02a12" stroke-width="1.5"/><path d="M9 2v8H6l5 7z" fill="#ffa080" fill-opacity=".7"/></svg>
<span class="t" style="top:1005.4px;font-size:22px;line-height:22px;color:#000;transform:scaleX(0.885);transform-origin:0 0;left:47.0px;">EURNZD</span>
<span class="t" style="top:1005.4px;font-size:22px;line-height:22px;color:#ff0000;transform:scaleX(1.108);transform-origin:100% 0;right:2649.0px;">1.73...</span>
<span class="t" style="top:1005.4px;font-size:22px;line-height:22px;color:#ff0000;transform:scaleX(1.108);transform-origin:100% 0;right:2557.0px;">1.73...</span>
<div style="left:334px;top:240px;width:32px;height:790px;background:#f3f3f3;"></div>
<div style="left:334px;top:240px;width:32px;height:32px;background:#e5e5e5;box-shadow:inset 2px 2px 0 #fff, inset -2px -2px 0 #404040, inset -4px -4px 0 #808080;"></div>
<svg style="left:343.0px;top:251.5px;" width="14" height="8" viewBox="0 0 14 8"><path d="M0 7H14L7 0Z" fill="#000"/></svg>
<div style="left:334px;top:998px;width:32px;height:32px;background:#e5e5e5;box-shadow:inset 2px 2px 0 #fff, inset -2px -2px 0 #404040, inset -4px -4px 0 #808080;"></div>
<svg style="left:343.0px;top:1010.5px;" width="14" height="8" viewBox="0 0 14 8"><path d="M0 0H14L7 7Z" fill="#000"/></svg>
<div style="left:334px;top:272px;width:32px;height:567px;background:#e5e5e5;box-shadow:inset 2px 2px 0 #fff, inset -2px -2px 0 #404040, inset -4px -4px 0 #808080;"></div>
<div style="left:8px;top:1030px;width:360px;height:2px;background:#000;"></div>
<div style="left:6px;top:1030px;width:2px;height:40px;background:#808080;"></div>
<div style="left:12px;top:1030px;width:133px;height:36px;background:#fff;border:2px solid #000;border-top:none;box-shadow:2px 2px 0 #909090;"></div>
<span class="t" style="top:1038.4px;font-size:22px;line-height:22px;color:#000;transform:scaleX(0.960);transform-origin:0 0;left:31.7px;">Символы</span>
<span class="t" style="top:1038.4px;font-size:22px;line-height:22px;color:#404040;transform:scaleX(0.983);transform-origin:0 0;left:163.7px;">Тиковый график</span>
<div style="left:348px;top:1040px;width:2px;height:24px;background:#404040;"></div>
<div style="left:0px;top:1070px;width:374px;height:2px;background:#fff;"></div>
<div style="left:0px;top:1076px;width:374px;height:2px;background:#8c8c8c;"></div>
<div style="left:0px;top:1078px;width:374px;height:2px;background:#fff;"></div>
<div style="left:6px;top:1082px;width:334px;height:26px;background:linear-gradient(to right,#8a8a8a,#b6b6b6);"></div>
<span class="t" style="top:1082.9px;font-size:22px;line-height:22px;color:#d6d2ca;transform:scaleX(0.994);transform-origin:0 0;left:10.9px;">Навигатор</span>
<svg style="left:353px;top:1091px;" width="10" height="10" viewBox="0 0 10 10"><path d="M1 1l8 8M9 1L1 9" stroke="#000" stroke-width="2.2"/></svg>
<div style="left:6px;top:1110px;width:364px;height:104px;background:#808080;border-right:2px solid #fff;"></div>
<div style="left:8px;top:1112px;width:360px;height:100px;background:#fff;"></div>
<div style="left:366px;top:1112px;width:2px;height:100px;background:#e5e5e5;"></div>
<div style="left:334px;top:1112px;width:32px;height:100px;background:#f3f3f3;"></div>
<div style="left:334px;top:1112px;width:32px;height:32px;background:#e5e5e5;box-shadow:inset 2px 2px 0 #fff, inset -2px -2px 0 #404040, inset -4px -4px 0 #808080;"></div>
<svg style="left:343.0px;top:1123.5px;" width="14" height="8" viewBox="0 0 14 8"><path d="M0 7H14L7 0Z" fill="#000"/></svg>
<div style="left:334px;top:1180px;width:32px;height:32px;background:#e5e5e5;box-shadow:inset 2px 2px 0 #fff, inset -2px -2px 0 #404040, inset -4px -4px 0 #808080;"></div>
<svg style="left:343.0px;top:1192.5px;" width="14" height="8" viewBox="0 0 14 8"><path d="M0 0H14L7 7Z" fill="#000"/></svg>
<div style="left:334px;top:1146px;width:32px;height:15px;background:#e5e5e5;box-shadow:inset 2px 2px 0 #fff, inset -2px -2px 0 #404040, inset -4px -4px 0 #808080;"></div>
<svg style="left:14px;top:1114px;" width="30" height="29" viewBox="0 0 30 29"><rect x="1" y="1" width="22" height="16" fill="#fff" stroke="#5a9ae0" stroke-width="2"/><rect x="0" y="0" width="24" height="4" fill="#5a9ae0"/><path d="M4 10h5M7 7v5M13 7v3h4" stroke="#7a9ae8" stroke-width="2" fill="none"/><rect x="7" y="11" width="20" height="16" fill="#fff" stroke="#5a9ae0" stroke-width="2"/><rect x="6" y="10" width="22" height="4" fill="#5a9ae0"/><path d="M11 17l4 6 4-6 4 6" stroke="#4d88ff" stroke-width="2.2" fill="none"/></svg>
<span class="t" style="top:1119.4px;font-size:22px;line-height:22px;color:#000;transform:scaleX(0.983);transform-origin:0 0;left:48.6px;">MetaTrader 4</span>
<div style="left:28px;top:1145px;width:2px;height:68px;background:repeating-linear-gradient(to bottom,#808080 0 2px,transparent 2px 4px);"></div>
<div style="left:38px;top:1161px;width:10px;height:2px;background:repeating-linear-gradient(to right,#808080 0 2px,transparent 2px 4px);"></div>
<div style="left:66px;top:1177px;width:2px;height:8px;background:repeating-linear-gradient(to bottom,#808080 0 2px,transparent 2px 4px);"></div>
<div style="left:76px;top:1194px;width:12px;height:2px;background:repeating-linear-gradient(to right,#808080 0 2px,transparent 2px 4px);"></div>
<div style="left:20px;top:1153px;width:18px;height:18px;background:#fff;border:2px solid #808080;"></div>
<div style="left:24px;top:1161px;width:10px;height:2px;background:#000;"></div>
<svg style="left:48px;top:1144px;" width="36" height="34" viewBox="0 0 36 34"><circle cx="12" cy="9" r="7" fill="#f0b030" stroke="#b07a10" stroke-width="1"/><circle cx="24" cy="9" r="7" fill="#f4c040" stroke="#b07a10" stroke-width="1"/><path d="M2 30c0-10 6-13 10-13s9 3 9 13z" fill="#35c035" stroke="#1a8a1a" stroke-width="1"/><path d="M12 32c0-11 6-15 12-15s10 4 10 15z" fill="#e8c030" stroke="#a88410" stroke-width="1"/><path d="M22 19l4 8 3-8z" fill="#fff3c0"/></svg>
<span class="t" style="top:1151.4px;font-size:22px;line-height:22px;color:#000;transform:scaleX(0.970);transform-origin:0 0;left:87.3px;">Счета</span>
<div style="left:58px;top:1186px;width:18px;height:18px;background:#fff;border:2px solid #808080;"></div>
<div style="left:62px;top:1194px;width:10px;height:2px;background:#000;"></div>
<svg style="left:92px;top:1178px;" width="26" height="34" viewBox="0 0 26 34"><path d="M3 2l16-2v30l-14 3z" fill="#3a8ae8" stroke="#1a5ab8" stroke-width="1.5"/><path d="M19 0l5 3v26l-5 1z" fill="#1a5ab8"/><path d="M7 8l9-1M7 13l9-1" stroke="#d8ecff" stroke-width="2.5"/><circle cx="14" cy="24" r="1.7" fill="#f0d040"/></svg>
<span class="t" style="top:1182.9px;font-size:22px;line-height:22px;color:#000;transform:scaleX(0.954);transform-origin:0 0;left:126.0px;">AMarkets-Real</span>
<div style="left:8px;top:1212px;width:360px;height:2px;background:#000;"></div>
<div style="left:6px;top:1212px;width:2px;height:40px;background:#808080;"></div>
<div style="left:12px;top:1212px;width:110px;height:36px;background:#fff;border:2px solid #000;border-top:none;box-shadow:2px 2px 0 #909090;"></div>
<span class="t" style="top:1219.4px;font-size:22px;line-height:22px;color:#000;transform:scaleX(0.946);transform-origin:0 0;left:31.7px;">Общие</span>
<span class="t" style="top:1219.4px;font-size:22px;line-height:22px;color:#404040;transform:scaleX(0.957);transform-origin:0 0;left:141.3px;">Избранное</span>
<div style="left:270px;top:1222px;width:2px;height:24px;background:#404040;"></div>
<div style="left:374px;top:206px;width:2px;height:1052px;background:#808080;"></div>
<div style="left:376px;top:206px;width:2px;height:1012px;background:#303030;"></div>
<div style="left:0px;top:1258px;width:376px;height:2px;background:#8c8c8c;"></div>
<div style="left:0px;top:1260px;width:2880px;height:2px;background:#fff;"></div>
<div style="left:376px;top:206px;width:2500px;height:2px;background:#303030;"></div>
<div style="left:378px;top:208px;width:2498px;height:1008px;overflow:hidden;background:#000;">
<div style="left:-378px;top:-208px;width:2880px;height:1578px;">
<div style="left:378px;top:882px;width:1487px;height:673px;background:#e5e5e5;box-shadow:inset 2px 2px 0 #efefef, inset 4px 4px 0 #fff, inset -2px -2px 0 #404040, inset -4px -4px 0 #8a8a8a;"></div>
<div style="left:386px;top:890px;width:1472px;height:36px;background:linear-gradient(to right,#808080,#c4c4c4);"></div>
<svg style="left:392px;top:894px;" width="30" height="29" viewBox="0 0 30 29"><rect x="1" y="1" width="22" height="16" fill="#fff" stroke="#6a9cff" stroke-width="2"/><rect x="0" y="0" width="24" height="4" fill="#6a9cff"/><path d="M4 10h5M7 7v5M13 7v3h4" stroke="#4d88ff" stroke-width="2" fill="none"/><rect x="7" y="11" width="20" height="16" fill="#fff" stroke="#6a9cff" stroke-width="2"/><rect x="6" y="10" width="22" height="4" fill="#6a9cff"/><path d="M11 17l4 6 4-6 4 6" stroke="#4d88ff" stroke-width="2.2" fill="none"/></svg>
<span class="t" style="top:899.4px;font-size:22px;line-height:22px;color:#d4d0c8;font-weight:bold;letter-spacing:0.4px;left:424.5px;">USDCHF,H4</span>
<div style="left:386px;top:928px;width:1472px;height:618px;background:#000;border-top:2px solid #808080;border-left:2px solid #808080;border-bottom:2px solid #fff;border-right:2px solid #fff;box-shadow:inset 2px 2px 0 #303030;"></div>
<div style="left:1866px;top:882px;width:1487px;height:673px;background:#e5e5e5;box-shadow:inset 2px 2px 0 #efefef, inset 4px 4px 0 #fff, inset -2px -2px 0 #404040, inset -4px -4px 0 #8a8a8a;"></div>
<div style="left:1874px;top:890px;width:1472px;height:36px;background:linear-gradient(to right,#808080,#c4c4c4);"></div>
<svg style="left:1880px;top:894px;" width="30" height="29" viewBox="0 0 30 29"><rect x="1" y="1" width="22" height="16" fill="#fff" stroke="#6a9cff" stroke-width="2"/><rect x="0" y="0" width="24" height="4" fill="#6a9cff"/><path d="M4 10h5M7 7v5M13 7v3h4" stroke="#4d88ff" stroke-width="2" fill="none"/><rect x="7" y="11" width="20" height="16" fill="#fff" stroke="#6a9cff" stroke-width="2"/><rect x="6" y="10" width="22" height="4" fill="#6a9cff"/><path d="M11 17l4 6 4-6 4 6" stroke="#4d88ff" stroke-width="2.2" fill="none"/></svg>
<span class="t" style="top:899.4px;font-size:22px;line-height:22px;color:#d4d0c8;font-weight:bold;letter-spacing:0.4px;left:1912.5px;">USDJPY,H4</span>
<div style="left:1874px;top:928px;width:1472px;height:618px;background:#000;border-top:2px solid #808080;border-left:2px solid #808080;border-bottom:2px solid #fff;border-right:2px solid #fff;box-shadow:inset 2px 2px 0 #303030;"></div>
<div style="left:1866px;top:208px;width:1487px;height:673px;background:#e5e5e5;box-shadow:inset 2px 2px 0 #efefef, inset 4px 4px 0 #fff, inset -2px -2px 0 #404040, inset -4px -4px 0 #8a8a8a;"></div>
<div style="left:1874px;top:216px;width:1472px;height:36px;background:linear-gradient(to right,#808080,#c4c4c4);"></div>
<svg style="left:1880px;top:220px;" width="30" height="29" viewBox="0 0 30 29"><rect x="1" y="1" width="22" height="16" fill="#fff" stroke="#6a9cff" stroke-width="2"/><rect x="0" y="0" width="24" height="4" fill="#6a9cff"/><path d="M4 10h5M7 7v5M13 7v3h4" stroke="#4d88ff" stroke-width="2" fill="none"/><rect x="7" y="11" width="20" height="16" fill="#fff" stroke="#6a9cff" stroke-width="2"/><rect x="6" y="10" width="22" height="4" fill="#6a9cff"/><path d="M11 17l4 6 4-6 4 6" stroke="#4d88ff" stroke-width="2.2" fill="none"/></svg>
<span class="t" style="top:225.4px;font-size:22px;line-height:22px;color:#d4d0c8;font-weight:bold;letter-spacing:0.4px;left:1912.5px;">GBPUSD,H4</span>
<div style="left:1874px;top:254px;width:1472px;height:618px;background:#000;border-top:2px solid #808080;border-left:2px solid #808080;border-bottom:2px solid #fff;border-right:2px solid #fff;box-shadow:inset 2px 2px 0 #303030;"></div>
<div style="left:378px;top:208px;width:1487px;height:673px;background:#e5e5e5;box-shadow:inset 2px 2px 0 #efefef, inset 4px 4px 0 #fff, inset -2px -2px 0 #404040, inset -4px -4px 0 #8a8a8a;"></div>
<div style="left:386px;top:216px;width:1472px;height:36px;background:linear-gradient(to right,#0a246a,#a6caf0);"></div>
<svg style="left:392px;top:220px;" width="30" height="29" viewBox="0 0 30 29"><rect x="1" y="1" width="22" height="16" fill="#fff" stroke="#6a9cff" stroke-width="2"/><rect x="0" y="0" width="24" height="4" fill="#6a9cff"/><path d="M4 10h5M7 7v5M13 7v3h4" stroke="#4d88ff" stroke-width="2" fill="none"/><rect x="7" y="11" width="20" height="16" fill="#fff" stroke="#6a9cff" stroke-width="2"/><rect x="6" y="10" width="22" height="4" fill="#6a9cff"/><path d="M11 17l4 6 4-6 4 6" stroke="#4d88ff" stroke-width="2.2" fill="none"/></svg>
<span class="t" style="top:225.4px;font-size:22px;line-height:22px;color:#fff;font-weight:bold;letter-spacing:0.4px;left:424.5px;">EURUSD,H4</span>
<div style="left:386px;top:254px;width:1472px;height:618px;background:#000;border-top:2px solid #808080;border-left:2px solid #808080;border-bottom:2px solid #fff;border-right:2px solid #fff;box-shadow:inset 2px 2px 0 #303030;"></div>
<div style="left:1754px;top:220px;width:30px;height:27px;background:#e5e5e5;box-shadow:inset 2px 2px 0 #fff, inset -2px -2px 0 #404040, inset -4px -4px 0 #808080;"></div>
<svg style="left:1754px;top:220px;" width="30" height="27" viewBox="0 0 30 27"><path d="M8 19h10" stroke="#000" stroke-width="3"/></svg>
<div style="left:1788px;top:220px;width:30px;height:27px;background:#e5e5e5;box-shadow:inset 2px 2px 0 #fff, inset -2px -2px 0 #404040, inset -4px -4px 0 #808080;"></div>
<svg style="left:1788px;top:220px;" width="30" height="27" viewBox="0 0 30 27"><rect x="7" y="7" width="15" height="13" fill="none" stroke="#808080" stroke-width="2"/><path d="M6 8h17" stroke="#808080" stroke-width="4"/></svg>
<div style="left:1822px;top:220px;width:32px;height:27px;background:#e5e5e5;box-shadow:inset 2px 2px 0 #fff, inset -2px -2px 0 #404040, inset -4px -4px 0 #808080;"></div>
<svg style="left:1822px;top:220px;" width="32" height="27" viewBox="0 0 32 27"><path d="M9 7l13 13M22 7L9 20" stroke="#000" stroke-width="3"/></svg>
<svg style="left:0px;top:0px;" width="2880" height="1578" viewBox="0 0 2880 1578"><path d="M461 264V829" stroke="#778899" stroke-width="2" stroke-dasharray="6 6" stroke-dashoffset="2"/><path d="M525 264V829" stroke="#778899" stroke-width="2" stroke-dasharray="6 6" stroke-dashoffset="2"/><path d="M589 264V829" stroke="#778899" stroke-width="2" stroke-dasharray="6 6" stroke-dashoffset="2"/><path d="M653 264V829" stroke="#778899" stroke-width="2" stroke-dasharray="6 6" stroke-dashoffset="2"/><path d="M717 264V829" stroke="#778899" stroke-width="2" stroke-dasharray="6 6" stroke-dashoffset="2"/><path d="M781 264V829" stroke="#778899" stroke-width="2" stroke-dasharray="6 6" stroke-dashoffset="2"/><path d="M845 264V829" stroke="#778899" stroke-width="2" stroke-dasharray="6 6" stroke-dashoffset="2"/><path d="M909 264V829" stroke="#778899" stroke-width="2" stroke-dasharray="6 6" stroke-dashoffset="2"/><path d="M973 264V829" stroke="#778899" stroke-width="2" stroke-dasharray="6 6" stroke-dashoffset="2"/><path d="M1037 264V829" stroke="#778899" stroke-width="2" stroke-dasharray="6 6" stroke-dashoffset="2"/><path d="M1101 264V829" stroke="#778899" stroke-width="2" stroke-dasharray="6 6" stroke-dashoffset="2"/><path d="M1165 264V829" stroke="#778899" stroke-width="2" stroke-dasharray="6 6" stroke-dashoffset="2"/><path d="M1229 264V829" stroke="#778899" stroke-width="2" stroke-dasharray="6 6" stroke-dashoffset="2"/><path d="M1293 264V829" stroke="#778899" stroke-width="2" stroke-dasharray="6 6" stroke-dashoffset="2"/><path d="M1357 264V829" stroke="#778899" stroke-width="2" stroke-dasharray="6 6" stroke-dashoffset="2"/><path d="M1421 264V829" stroke="#778899" stroke-width="2" stroke-dasharray="6 6" stroke-dashoffset="2"/><path d="M1485 264V829" stroke="#778899" stroke-width="2" stroke-dasharray="6 6" stroke-dashoffset="2"/><path d="M1549 264V829" stroke="#778899" stroke-width="2" stroke-dasharray="6 6" stroke-dashoffset="2"/><path d="M1613 264V829" stroke="#778899" stroke-width="2" stroke-dasharray="6 6" stroke-dashoffset="2"/><path d="M1677 264V829" stroke="#778899" stroke-width="2" stroke-dasharray="6 6" stroke-dashoffset="2"/><path d="M1741 264V829" stroke="#778899" stroke-width="2" stroke-dasharray="6 6" stroke-dashoffset="2"/><path d="M396 295H1775" stroke="#778899" stroke-width="2" stroke-dasharray="6 6" stroke-dashoffset="11"/><path d="M396 361H1775" stroke="#778899" stroke-width="2" stroke-dasharray="6 6" stroke-dashoffset="11"/><path d="M396 427H1775" stroke="#778899" stroke-width="2" stroke-dasharray="6 6" stroke-dashoffset="11"/><path d="M396 493H1775" stroke="#778899" stroke-width="2" stroke-dasharray="6 6" stroke-dashoffset="11"/><path d="M396 559H1775" stroke="#778899" stroke-width="2" stroke-dasharray="6 6" stroke-dashoffset="11"/><path d="M396 625H1775" stroke="#778899" stroke-width="2" stroke-dasharray="6 6" stroke-dashoffset="11"/><path d="M396 691H1775" stroke="#778899" stroke-width="2" stroke-dasharray="6 6" stroke-dashoffset="11"/><path d="M396 757H1775" stroke="#778899" stroke-width="2" stroke-dasharray="6 6" stroke-dashoffset="11"/><path d="M396 823H1775" stroke="#778899" stroke-width="2" stroke-dasharray="6 6" stroke-dashoffset="11"/><path d="M396 407H1775" stroke="#778899" stroke-width="2"/><polyline points="459,827 470,808 485,782 500,756 515,730 528,708 540,689 548,680 558,669" fill="none" stroke="#ff0000" stroke-width="1.8"/><polyline points="1541,414 1553,402 1566,392 1580,389 1595,380 1612,372 1625,373 1640,378 1659,383 1690,383 1705,387 1721,391 1732,397 1741,400" fill="none" stroke="#ff0000" stroke-width="1.8"/><path d="M397 706V801" stroke="#00ff00" stroke-width="2"/><rect x="392" y="751" width="10" height="31" fill="#fff" stroke="#00ff00" stroke-width="2"/><path d="M413 726V814" stroke="#00ff00" stroke-width="2"/><rect x="408" y="755" width="10" height="27" fill="#000" stroke="#00ff00" stroke-width="2"/><path d="M429 660V769" stroke="#00ff00" stroke-width="2"/><rect x="424" y="695" width="10" height="60" fill="#000" stroke="#00ff00" stroke-width="2"/><path d="M445 638V701" stroke="#00ff00" stroke-width="2"/><rect x="440" y="649" width="10" height="46" fill="#000" stroke="#00ff00" stroke-width="2"/><path d="M461 644V675" stroke="#00ff00" stroke-width="2"/><rect x="455" y="649" width="12" height="3" fill="#00ff00"/><path d="M477 623V654" stroke="#00ff00" stroke-width="2"/><rect x="472" y="635" width="10" height="14" fill="#000" stroke="#00ff00" stroke-width="2"/><path d="M493 590V677" stroke="#00ff00" stroke-width="2"/><rect x="488" y="635" width="10" height="20" fill="#fff" stroke="#00ff00" stroke-width="2"/><path d="M509 542V671" stroke="#00ff00" stroke-width="2"/><rect x="504" y="565" width="10" height="90" fill="#000" stroke="#00ff00" stroke-width="2"/><path d="M525 512V595" stroke="#00ff00" stroke-width="2"/><rect x="520" y="565" width="10" height="12" fill="#fff" stroke="#00ff00" stroke-width="2"/><path d="M541 569V608" stroke="#00ff00" stroke-width="2"/><rect x="536" y="577" width="10" height="12" fill="#fff" stroke="#00ff00" stroke-width="2"/><path d="M557 558V593" stroke="#00ff00" stroke-width="2"/><rect x="551" y="580" width="12" height="3" fill="#00ff00"/><path d="M1437 376V430" stroke="#00ff00" stroke-width="2"/><rect x="1432" y="399" width="10" height="31" fill="#000" stroke="#00ff00" stroke-width="2"/><path d="M1453 356V401" stroke="#00ff00" stroke-width="2"/><rect x="1448" y="383" width="10" height="14" fill="#000" stroke="#00ff00" stroke-width="2"/><path d="M1469 324V399" stroke="#00ff00" stroke-width="2"/><rect x="1464" y="361" width="10" height="22" fill="#000" stroke="#00ff00" stroke-width="2"/><path d="M1485 301V369" stroke="#00ff00" stroke-width="2"/><rect x="1480" y="321" width="10" height="41" fill="#000" stroke="#00ff00" stroke-width="2"/><path d="M1501 292V325" stroke="#00ff00" stroke-width="2"/><rect x="1496" y="307" width="10" height="14" fill="#000" stroke="#00ff00" stroke-width="2"/><path d="M1517 295V343" stroke="#00ff00" stroke-width="2"/><rect x="1512" y="305" width="10" height="23" fill="#fff" stroke="#00ff00" stroke-width="2"/><path d="M1533 324V369" stroke="#00ff00" stroke-width="2"/><rect x="1528" y="328" width="10" height="31" fill="#fff" stroke="#00ff00" stroke-width="2"/><path d="M1549 314V360" stroke="#00ff00" stroke-width="2"/><rect x="1544" y="345" width="10" height="14" fill="#000" stroke="#00ff00" stroke-width="2"/><path d="M1565 300V360" stroke="#00ff00" stroke-width="2"/><rect x="1559" y="344" width="12" height="3" fill="#00ff00"/><path d="M1581 336V399" stroke="#00ff00" stroke-width="2"/><rect x="1576" y="347" width="10" height="25" fill="#fff" stroke="#00ff00" stroke-width="2"/><path d="M1597 344V378" stroke="#00ff00" stroke-width="2"/><rect x="1592" y="351" width="10" height="21" fill="#000" stroke="#00ff00" stroke-width="2"/><path d="M1613 370V430" stroke="#00ff00" stroke-width="2"/><rect x="1608" y="403" width="10" height="27" fill="#fff" stroke="#00ff00" stroke-width="2"/><path d="M1645 394V430" stroke="#00ff00" stroke-width="2"/><rect x="1639" y="429" width="12" height="3" fill="#00ff00"/><path d="M1677 368V430" stroke="#00ff00" stroke-width="2"/><rect x="1672" y="375" width="10" height="55" fill="#000" stroke="#00ff00" stroke-width="2"/><path d="M1693 336V394" stroke="#00ff00" stroke-width="2"/><rect x="1688" y="368" width="10" height="7" fill="#000" stroke="#00ff00" stroke-width="2"/><path d="M1709 342V394" stroke="#00ff00" stroke-width="2"/><rect x="1704" y="368" width="10" height="17" fill="#fff" stroke="#00ff00" stroke-width="2"/><path d="M1725 376V430" stroke="#00ff00" stroke-width="2"/><rect x="1720" y="385" width="10" height="45" fill="#fff" stroke="#00ff00" stroke-width="2"/><path d="M1741 396V430" stroke="#00ff00" stroke-width="2"/><rect x="1736" y="407" width="10" height="23" fill="#000" stroke="#00ff00" stroke-width="2"/><path d="M395 830V263H1777" stroke="#fff" stroke-width="2" fill="none"/><path d="M1776 262V831" stroke="#fff" stroke-width="2"/><path d="M394 830H1777" stroke="#fff" stroke-width="2"/><path d="M402 284h14l-7-8z" fill="#fff"/><path d="M1777 295h6" stroke="#fff" stroke-width="2"/><path d="M1777 361h6" stroke="#fff" stroke-width="2"/><path d="M1777 427h6" stroke="#fff" stroke-width="2"/><path d="M397 830v7" stroke="#fff" stroke-width="2"/><path d="M525 830v7" stroke="#fff" stroke-width="2"/></svg>
<span class="t" style="top:270.3px;font-size:18.5px;line-height:18.5px;color:#fff;transform:scaleX(1.005);transform-origin:0 0;left:425.5px;">EURUSD,H4  1.22178 1.22251 1.22130 1.22212</span>
<span class="t" style="top:286.3px;font-size:18.5px;line-height:18.5px;color:#fff;transform:scaleX(0.927);transform-origin:0 0;left:1788.0px;">1.22710</span>
<span class="t" style="top:352.3px;font-size:18.5px;line-height:18.5px;color:#fff;transform:scaleX(0.935);transform-origin:0 0;left:1788.0px;">1.22415</span>
<div style="left:1779px;top:397px;width:76px;height:19px;background:#e8e8e8;"></div>
<span class="t" style="top:397.8px;font-size:18.5px;line-height:18.5px;color:#000;transform:scaleX(0.927);transform-origin:0 0;left:1788.0px;">1.22212</span>
<span class="t" style="top:838.3px;font-size:18.5px;line-height:18.5px;color:#fff;transform:scaleX(0.957);transform-origin:0 0;left:394.6px;">2 Dec 2020</span>
<span class="t" style="top:838.3px;font-size:18.5px;line-height:18.5px;color:#fff;left:522.0px;">3 Dec 12:00</span>
<div style="left:396px;top:290px;width:384px;height:104px;background:#000;"></div>
<div style="left:402px;top:294px;width:88px;height:42px;background:linear-gradient(to bottom,#ff5454,#ee3a3a 60%,#e03030);border:2px solid #c01818;border-bottom:none;"></div>
<div style="left:689px;top:294px;width:88px;height:42px;background:linear-gradient(to bottom,#ff5454,#ee3a3a 60%,#e03030);border:2px solid #c01818;border-bottom:none;"></div>
<div style="left:402px;top:334px;width:186px;height:56px;background:linear-gradient(to bottom,#e03232,#c41414 70%,#b40404);border:2px solid #c01818;border-top:none;"></div>
<div style="left:592px;top:334px;width:185px;height:56px;background:linear-gradient(to bottom,#e03232,#c41414 70%,#b40404);border:2px solid #c01818;border-top:none;"></div>
<div style="left:404px;top:334px;width:86px;height:2px;background:#c01818;opacity:0;"></div>
<div style="left:410px;top:332px;width:70px;height:2px;background:#ff9090;"></div>
<div style="left:697px;top:332px;width:70px;height:2px;background:#ff9090;"></div>
<span class="t" style="top:305.8px;font-size:21.5px;line-height:21.5px;color:#fff;transform:scaleX(0.801);transform-origin:0 0;left:421.6px;">SELL</span>
<span class="t" style="top:305.8px;font-size:21.5px;line-height:21.5px;color:#fff;transform:scaleX(0.826);transform-origin:0 0;left:711.5px;">BUY</span>
<div style="left:496px;top:296px;width:32px;height:32px;background:#e4e4e4;box-shadow:inset -2px -2px 0 #c8c8c8;"></div>
<svg style="left:505px;top:307.5px;" width="14" height="8" viewBox="0 0 14 8"><path d="M0 0H14L7 7Z" fill="#000"/></svg>
<div style="left:530px;top:296px;width:118px;height:32px;background:#fff;"></div>
<span class="t" style="top:303.4px;font-size:22px;line-height:22px;color:#000;transform:scaleX(0.968);transform-origin:0 0;left:597.0px;">1.00</span>
<div style="left:650px;top:296px;width:32px;height:32px;background:#e4e4e4;box-shadow:inset -2px -2px 0 #c8c8c8;"></div>
<svg style="left:659px;top:306.5px;" width="14" height="8" viewBox="0 0 14 8"><path d="M0 7H14L7 0Z" fill="#000"/></svg>
<span class="t" style="top:369.1px;font-size:20px;line-height:20px;color:#fff;font-weight:bold;transform:scaleX(1.242);transform-origin:0 0;left:425.5px;">1.22</span>
<span class="t" style="top:329.8px;font-size:67px;line-height:67px;color:#fff;transform:scaleX(0.925);transform-origin:0 0;left:483.5px;">21</span>
<span class="t" style="top:333.0px;font-size:22.5px;line-height:22.5px;color:#fff;font-weight:bold;transform:scaleX(0.985);transform-origin:0 0;left:552.0px;">2</span>
<span class="t" style="top:369.1px;font-size:20px;line-height:20px;color:#fff;font-weight:bold;transform:scaleX(1.242);transform-origin:0 0;left:613.5px;">1.22</span>
<span class="t" style="top:329.8px;font-size:67px;line-height:67px;color:#fff;transform:scaleX(0.925);transform-origin:0 0;left:673.5px;">22</span>
<span class="t" style="top:333.0px;font-size:22.5px;line-height:22.5px;color:#fff;font-weight:bold;transform:scaleX(0.985);transform-origin:0 0;left:740.0px;">6</span>
<svg style="left:0px;top:0px;" width="2880" height="1578" viewBox="0 0 2880 1578"><path d="M1949 264V829" stroke="#778899" stroke-width="2" stroke-dasharray="6 6" stroke-dashoffset="2"/><path d="M2013 264V829" stroke="#778899" stroke-width="2" stroke-dasharray="6 6" stroke-dashoffset="2"/><path d="M2077 264V829" stroke="#778899" stroke-width="2" stroke-dasharray="6 6" stroke-dashoffset="2"/><path d="M2141 264V829" stroke="#778899" stroke-width="2" stroke-dasharray="6 6" stroke-dashoffset="2"/><path d="M2205 264V829" stroke="#778899" stroke-width="2" stroke-dasharray="6 6" stroke-dashoffset="2"/><path d="M2269 264V829" stroke="#778899" stroke-width="2" stroke-dasharray="6 6" stroke-dashoffset="2"/><path d="M2333 264V829" stroke="#778899" stroke-width="2" stroke-dasharray="6 6" stroke-dashoffset="2"/><path d="M2397 264V829" stroke="#778899" stroke-width="2" stroke-dasharray="6 6" stroke-dashoffset="2"/><path d="M2461 264V829" stroke="#778899" stroke-width="2" stroke-dasharray="6 6" stroke-dashoffset="2"/><path d="M2525 264V829" stroke="#778899" stroke-width="2" stroke-dasharray="6 6" stroke-dashoffset="2"/><path d="M2589 264V829" stroke="#778899" stroke-width="2" stroke-dasharray="6 6" stroke-dashoffset="2"/><path d="M2653 264V829" stroke="#778899" stroke-width="2" stroke-dasharray="6 6" stroke-dashoffset="2"/><path d="M2717 264V829" stroke="#778899" stroke-width="2" stroke-dasharray="6 6" stroke-dashoffset="2"/><path d="M2781 264V829" stroke="#778899" stroke-width="2" stroke-dasharray="6 6" stroke-dashoffset="2"/><path d="M2845 264V829" stroke="#778899" stroke-width="2" stroke-dasharray="6 6" stroke-dashoffset="2"/><path d="M2909 264V829" stroke="#778899" stroke-width="2" stroke-dasharray="6 6" stroke-dashoffset="2"/><path d="M2973 264V829" stroke="#778899" stroke-width="2" stroke-dasharray="6 6" stroke-dashoffset="2"/><path d="M3037 264V829" stroke="#778899" stroke-width="2" stroke-dasharray="6 6" stroke-dashoffset="2"/><path d="M3101 264V829" stroke="#778899" stroke-width="2" stroke-dasharray="6 6" stroke-dashoffset="2"/><path d="M3165 264V829" stroke="#778899" stroke-width="2" stroke-dasharray="6 6" stroke-dashoffset="2"/><path d="M3229 264V829" stroke="#778899" stroke-width="2" stroke-dasharray="6 6" stroke-dashoffset="2"/><path d="M1884 295H3263" stroke="#778899" stroke-width="2" stroke-dasharray="6 6" stroke-dashoffset="11"/><path d="M1884 361H3263" stroke="#778899" stroke-width="2" stroke-dasharray="6 6" stroke-dashoffset="11"/><path d="M1884 427H3263" stroke="#778899" stroke-width="2" stroke-dasharray="6 6" stroke-dashoffset="11"/><path d="M1884 493H3263" stroke="#778899" stroke-width="2" stroke-dasharray="6 6" stroke-dashoffset="11"/><path d="M1884 559H3263" stroke="#778899" stroke-width="2" stroke-dasharray="6 6" stroke-dashoffset="11"/><path d="M1884 625H3263" stroke="#778899" stroke-width="2" stroke-dasharray="6 6" stroke-dashoffset="11"/><path d="M1884 691H3263" stroke="#778899" stroke-width="2" stroke-dasharray="6 6" stroke-dashoffset="11"/><path d="M1884 757H3263" stroke="#778899" stroke-width="2" stroke-dasharray="6 6" stroke-dashoffset="11"/><path d="M1884 823H3263" stroke="#778899" stroke-width="2" stroke-dasharray="6 6" stroke-dashoffset="11"/><path d="M1884 516.5H2880" stroke="#778899" stroke-width="2"/><path d="M2076 463H2880" stroke="#22dd22" stroke-width="2" stroke-dasharray="18 12 5 12"/><path d="M2069 661V682" stroke="#00ff00" stroke-width="2"/><path d="M2065 677h4" stroke="#00ff00" stroke-width="2"/><path d="M2069 666h4" stroke="#00ff00" stroke-width="2"/><path d="M2077 656V677" stroke="#00ff00" stroke-width="2"/><path d="M2073 666h4" stroke="#00ff00" stroke-width="2"/><path d="M2077 668h4" stroke="#00ff00" stroke-width="2"/><path d="M2085 648V673" stroke="#00ff00" stroke-width="2"/><path d="M2081 668h4" stroke="#00ff00" stroke-width="2"/><path d="M2085 653h4" stroke="#00ff00" stroke-width="2"/><path d="M2093 622V664" stroke="#00ff00" stroke-width="2"/><path d="M2089 653h4" stroke="#00ff00" stroke-width="2"/><path d="M2093 642h4" stroke="#00ff00" stroke-width="2"/><path d="M2101 626V658" stroke="#00ff00" stroke-width="2"/><path d="M2097 642h4" stroke="#00ff00" stroke-width="2"/><path d="M2101 637h4" stroke="#00ff00" stroke-width="2"/><path d="M2109 606V651" stroke="#00ff00" stroke-width="2"/><path d="M2105 637h4" stroke="#00ff00" stroke-width="2"/><path d="M2109 615h4" stroke="#00ff00" stroke-width="2"/><path d="M2117 629V654" stroke="#00ff00" stroke-width="2"/><path d="M2113 630h4" stroke="#00ff00" stroke-width="2"/><path d="M2117 640h4" stroke="#00ff00" stroke-width="2"/><path d="M2125 648V696" stroke="#00ff00" stroke-width="2"/><path d="M2121 649h4" stroke="#00ff00" stroke-width="2"/><path d="M2125 657h4" stroke="#00ff00" stroke-width="2"/><path d="M2133 674V696" stroke="#00ff00" stroke-width="2"/><path d="M2129 675h4" stroke="#00ff00" stroke-width="2"/><path d="M2133 683h4" stroke="#00ff00" stroke-width="2"/><path d="M2141 670V715" stroke="#00ff00" stroke-width="2"/><path d="M2137 683h4" stroke="#00ff00" stroke-width="2"/><path d="M2141 679h4" stroke="#00ff00" stroke-width="2"/><path d="M2149 654V715" stroke="#00ff00" stroke-width="2"/><path d="M2145 679h4" stroke="#00ff00" stroke-width="2"/><path d="M2149 667h4" stroke="#00ff00" stroke-width="2"/><path d="M2157 678V726" stroke="#00ff00" stroke-width="2"/><path d="M2153 679h4" stroke="#00ff00" stroke-width="2"/><path d="M2157 697h4" stroke="#00ff00" stroke-width="2"/><path d="M2165 641V688" stroke="#00ff00" stroke-width="2"/><path d="M2161 687h4" stroke="#00ff00" stroke-width="2"/><path d="M2165 671h4" stroke="#00ff00" stroke-width="2"/><path d="M2173 652V677" stroke="#00ff00" stroke-width="2"/><path d="M2169 671h4" stroke="#00ff00" stroke-width="2"/><path d="M2173 658h4" stroke="#00ff00" stroke-width="2"/><path d="M2181 635V667" stroke="#00ff00" stroke-width="2"/><path d="M2177 658h4" stroke="#00ff00" stroke-width="2"/><path d="M2181 644h4" stroke="#00ff00" stroke-width="2"/><path d="M2189 626V671" stroke="#00ff00" stroke-width="2"/><path d="M2185 644h4" stroke="#00ff00" stroke-width="2"/><path d="M2189 650h4" stroke="#00ff00" stroke-width="2"/><path d="M2197 632V664" stroke="#00ff00" stroke-width="2"/><path d="M2193 650h4" stroke="#00ff00" stroke-width="2"/><path d="M2197 655h4" stroke="#00ff00" stroke-width="2"/><path d="M2205 622V651" stroke="#00ff00" stroke-width="2"/><path d="M2201 650h4" stroke="#00ff00" stroke-width="2"/><path d="M2205 637h4" stroke="#00ff00" stroke-width="2"/><path d="M2213 620V661" stroke="#00ff00" stroke-width="2"/><path d="M2209 637h4" stroke="#00ff00" stroke-width="2"/><path d="M2213 636h4" stroke="#00ff00" stroke-width="2"/><path d="M2221 592V633" stroke="#00ff00" stroke-width="2"/><path d="M2217 632h4" stroke="#00ff00" stroke-width="2"/><path d="M2221 622h4" stroke="#00ff00" stroke-width="2"/><path d="M2229 592V607" stroke="#00ff00" stroke-width="2"/><path d="M2225 606h4" stroke="#00ff00" stroke-width="2"/><path d="M2229 595h4" stroke="#00ff00" stroke-width="2"/><path d="M2237 536V607" stroke="#00ff00" stroke-width="2"/><path d="M2233 595h4" stroke="#00ff00" stroke-width="2"/><path d="M2237 583h4" stroke="#00ff00" stroke-width="2"/><path d="M2245 520V569" stroke="#00ff00" stroke-width="2"/><path d="M2241 568h4" stroke="#00ff00" stroke-width="2"/><path d="M2245 536h4" stroke="#00ff00" stroke-width="2"/><path d="M2253 523V658" stroke="#00ff00" stroke-width="2"/><path d="M2249 536h4" stroke="#00ff00" stroke-width="2"/><path d="M2253 555h4" stroke="#00ff00" stroke-width="2"/><path d="M2261 587V613" stroke="#00ff00" stroke-width="2"/><path d="M2257 588h4" stroke="#00ff00" stroke-width="2"/><path d="M2261 592h4" stroke="#00ff00" stroke-width="2"/><path d="M2269 580V604" stroke="#00ff00" stroke-width="2"/><path d="M2265 592h4" stroke="#00ff00" stroke-width="2"/><path d="M2269 588h4" stroke="#00ff00" stroke-width="2"/><path d="M2277 582V598" stroke="#00ff00" stroke-width="2"/><path d="M2273 588h4" stroke="#00ff00" stroke-width="2"/><path d="M2277 592h4" stroke="#00ff00" stroke-width="2"/><path d="M2285 539V587" stroke="#00ff00" stroke-width="2"/><path d="M2281 586h4" stroke="#00ff00" stroke-width="2"/><path d="M2285 551h4" stroke="#00ff00" stroke-width="2"/><path d="M2293 550V610" stroke="#00ff00" stroke-width="2"/><path d="M2289 551h4" stroke="#00ff00" stroke-width="2"/><path d="M2293 580h4" stroke="#00ff00" stroke-width="2"/><path d="M2301 558V627" stroke="#00ff00" stroke-width="2"/><path d="M2297 580h4" stroke="#00ff00" stroke-width="2"/><path d="M2301 595h4" stroke="#00ff00" stroke-width="2"/><path d="M2309 554V580" stroke="#00ff00" stroke-width="2"/><path d="M2305 579h4" stroke="#00ff00" stroke-width="2"/><path d="M2309 564h4" stroke="#00ff00" stroke-width="2"/><path d="M2317 552V565" stroke="#00ff00" stroke-width="2"/><path d="M2313 564h4" stroke="#00ff00" stroke-width="2"/><path d="M2317 558h4" stroke="#00ff00" stroke-width="2"/><path d="M2325 552V575" stroke="#00ff00" stroke-width="2"/><path d="M2321 558h4" stroke="#00ff00" stroke-width="2"/><path d="M2325 557h4" stroke="#00ff00" stroke-width="2"/><path d="M2333 534V590" stroke="#00ff00" stroke-width="2"/><path d="M2329 557h4" stroke="#00ff00" stroke-width="2"/><path d="M2333 545h4" stroke="#00ff00" stroke-width="2"/><path d="M2341 558V615" stroke="#00ff00" stroke-width="2"/><path d="M2337 559h4" stroke="#00ff00" stroke-width="2"/><path d="M2341 574h4" stroke="#00ff00" stroke-width="2"/><path d="M2349 523V594" stroke="#00ff00" stroke-width="2"/><path d="M2345 574h4" stroke="#00ff00" stroke-width="2"/><path d="M2349 563h4" stroke="#00ff00" stroke-width="2"/><path d="M2357 523V548" stroke="#00ff00" stroke-width="2"/><path d="M2353 547h4" stroke="#00ff00" stroke-width="2"/><path d="M2357 533h4" stroke="#00ff00" stroke-width="2"/><path d="M2365 520V548" stroke="#00ff00" stroke-width="2"/><path d="M2361 533h4" stroke="#00ff00" stroke-width="2"/><path d="M2365 530h4" stroke="#00ff00" stroke-width="2"/><path d="M2373 522V536" stroke="#00ff00" stroke-width="2"/><path d="M2369 530h4" stroke="#00ff00" stroke-width="2"/><path d="M2373 529h4" stroke="#00ff00" stroke-width="2"/><path d="M2381 520V566" stroke="#00ff00" stroke-width="2"/><path d="M2377 529h4" stroke="#00ff00" stroke-width="2"/><path d="M2381 540h4" stroke="#00ff00" stroke-width="2"/><path d="M2389 555V586" stroke="#00ff00" stroke-width="2"/><path d="M2385 556h4" stroke="#00ff00" stroke-width="2"/><path d="M2389 565h4" stroke="#00ff00" stroke-width="2"/><path d="M2397 554V598" stroke="#00ff00" stroke-width="2"/><path d="M2393 565h4" stroke="#00ff00" stroke-width="2"/><path d="M2397 582h4" stroke="#00ff00" stroke-width="2"/><path d="M2405 562V583" stroke="#00ff00" stroke-width="2"/><path d="M2401 582h4" stroke="#00ff00" stroke-width="2"/><path d="M2405 574h4" stroke="#00ff00" stroke-width="2"/><path d="M2413 560V583" stroke="#00ff00" stroke-width="2"/><path d="M2409 574h4" stroke="#00ff00" stroke-width="2"/><path d="M2413 567h4" stroke="#00ff00" stroke-width="2"/><path d="M2421 542V566" stroke="#00ff00" stroke-width="2"/><path d="M2417 565h4" stroke="#00ff00" stroke-width="2"/><path d="M2421 554h4" stroke="#00ff00" stroke-width="2"/><path d="M2429 536V568" stroke="#00ff00" stroke-width="2"/><path d="M2425 554h4" stroke="#00ff00" stroke-width="2"/><path d="M2429 551h4" stroke="#00ff00" stroke-width="2"/><path d="M2437 558V610" stroke="#00ff00" stroke-width="2"/><path d="M2433 559h4" stroke="#00ff00" stroke-width="2"/><path d="M2437 593h4" stroke="#00ff00" stroke-width="2"/><path d="M2445 557V627" stroke="#00ff00" stroke-width="2"/><path d="M2441 593h4" stroke="#00ff00" stroke-width="2"/><path d="M2445 598h4" stroke="#00ff00" stroke-width="2"/><path d="M2453 600V627" stroke="#00ff00" stroke-width="2"/><path d="M2449 601h4" stroke="#00ff00" stroke-width="2"/><path d="M2453 609h4" stroke="#00ff00" stroke-width="2"/><path d="M2461 577V612" stroke="#00ff00" stroke-width="2"/><path d="M2457 609h4" stroke="#00ff00" stroke-width="2"/><path d="M2461 603h4" stroke="#00ff00" stroke-width="2"/><path d="M2469 574V586" stroke="#00ff00" stroke-width="2"/><path d="M2465 585h4" stroke="#00ff00" stroke-width="2"/><path d="M2469 577h4" stroke="#00ff00" stroke-width="2"/><path d="M2477 560V615" stroke="#00ff00" stroke-width="2"/><path d="M2473 577h4" stroke="#00ff00" stroke-width="2"/><path d="M2477 582h4" stroke="#00ff00" stroke-width="2"/><path d="M2469 575V585" stroke="#00ff00" stroke-width="2"/><path d="M2465 582h4" stroke="#00ff00" stroke-width="2"/><path d="M2469 581h4" stroke="#00ff00" stroke-width="2"/><path d="M2477 560V615" stroke="#00ff00" stroke-width="2"/><path d="M2473 581h4" stroke="#00ff00" stroke-width="2"/><path d="M2477 574h4" stroke="#00ff00" stroke-width="2"/><path d="M2485 550V601" stroke="#00ff00" stroke-width="2"/><path d="M2481 574h4" stroke="#00ff00" stroke-width="2"/><path d="M2485 573h4" stroke="#00ff00" stroke-width="2"/><path d="M2493 535V604" stroke="#00ff00" stroke-width="2"/><path d="M2489 573h4" stroke="#00ff00" stroke-width="2"/><path d="M2493 547h4" stroke="#00ff00" stroke-width="2"/><path d="M2501 557V603" stroke="#00ff00" stroke-width="2"/><path d="M2497 558h4" stroke="#00ff00" stroke-width="2"/><path d="M2501 582h4" stroke="#00ff00" stroke-width="2"/><path d="M2509 571V601" stroke="#00ff00" stroke-width="2"/><path d="M2505 582h4" stroke="#00ff00" stroke-width="2"/><path d="M2509 589h4" stroke="#00ff00" stroke-width="2"/><path d="M2517 552V575" stroke="#00ff00" stroke-width="2"/><path d="M2513 574h4" stroke="#00ff00" stroke-width="2"/><path d="M2517 563h4" stroke="#00ff00" stroke-width="2"/><path d="M2525 511V569" stroke="#00ff00" stroke-width="2"/><path d="M2521 563h4" stroke="#00ff00" stroke-width="2"/><path d="M2525 550h4" stroke="#00ff00" stroke-width="2"/><path d="M2533 554V604" stroke="#00ff00" stroke-width="2"/><path d="M2529 555h4" stroke="#00ff00" stroke-width="2"/><path d="M2533 571h4" stroke="#00ff00" stroke-width="2"/><path d="M2541 474V587" stroke="#00ff00" stroke-width="2"/><path d="M2537 571h4" stroke="#00ff00" stroke-width="2"/><path d="M2541 538h4" stroke="#00ff00" stroke-width="2"/><path d="M2549 488V509" stroke="#00ff00" stroke-width="2"/><path d="M2545 508h4" stroke="#00ff00" stroke-width="2"/><path d="M2549 499h4" stroke="#00ff00" stroke-width="2"/><path d="M2557 488V511" stroke="#00ff00" stroke-width="2"/><path d="M2553 499h4" stroke="#00ff00" stroke-width="2"/><path d="M2557 500h4" stroke="#00ff00" stroke-width="2"/><path d="M2565 492V509" stroke="#00ff00" stroke-width="2"/><path d="M2561 500h4" stroke="#00ff00" stroke-width="2"/><path d="M2565 499h4" stroke="#00ff00" stroke-width="2"/><path d="M2573 476V582" stroke="#00ff00" stroke-width="2"/><path d="M2569 499h4" stroke="#00ff00" stroke-width="2"/><path d="M2573 545h4" stroke="#00ff00" stroke-width="2"/><path d="M2581 553V627" stroke="#00ff00" stroke-width="2"/><path d="M2577 554h4" stroke="#00ff00" stroke-width="2"/><path d="M2581 606h4" stroke="#00ff00" stroke-width="2"/><path d="M2589 564V634" stroke="#00ff00" stroke-width="2"/><path d="M2585 606h4" stroke="#00ff00" stroke-width="2"/><path d="M2589 594h4" stroke="#00ff00" stroke-width="2"/><path d="M2597 544V574" stroke="#00ff00" stroke-width="2"/><path d="M2593 573h4" stroke="#00ff00" stroke-width="2"/><path d="M2597 560h4" stroke="#00ff00" stroke-width="2"/><path d="M2605 541V566" stroke="#00ff00" stroke-width="2"/><path d="M2601 560h4" stroke="#00ff00" stroke-width="2"/><path d="M2605 546h4" stroke="#00ff00" stroke-width="2"/><path d="M2613 529V555" stroke="#00ff00" stroke-width="2"/><path d="M2609 546h4" stroke="#00ff00" stroke-width="2"/><path d="M2613 544h4" stroke="#00ff00" stroke-width="2"/><path d="M2621 504V539" stroke="#00ff00" stroke-width="2"/><path d="M2617 538h4" stroke="#00ff00" stroke-width="2"/><path d="M2621 523h4" stroke="#00ff00" stroke-width="2"/><path d="M2629 452V520" stroke="#00ff00" stroke-width="2"/><path d="M2625 519h4" stroke="#00ff00" stroke-width="2"/><path d="M2629 503h4" stroke="#00ff00" stroke-width="2"/><path d="M2637 416V469" stroke="#00ff00" stroke-width="2"/><path d="M2633 468h4" stroke="#00ff00" stroke-width="2"/><path d="M2637 450h4" stroke="#00ff00" stroke-width="2"/><path d="M2645 430V488" stroke="#00ff00" stroke-width="2"/><path d="M2641 450h4" stroke="#00ff00" stroke-width="2"/><path d="M2645 449h4" stroke="#00ff00" stroke-width="2"/><path d="M2653 451V477" stroke="#00ff00" stroke-width="2"/><path d="M2649 452h4" stroke="#00ff00" stroke-width="2"/><path d="M2653 461h4" stroke="#00ff00" stroke-width="2"/><path d="M2661 463V475" stroke="#00ff00" stroke-width="2"/><path d="M2657 464h4" stroke="#00ff00" stroke-width="2"/><path d="M2661 470h4" stroke="#00ff00" stroke-width="2"/><path d="M2669 424V509" stroke="#00ff00" stroke-width="2"/><path d="M2665 470h4" stroke="#00ff00" stroke-width="2"/><path d="M2669 438h4" stroke="#00ff00" stroke-width="2"/><path d="M2677 411V486" stroke="#00ff00" stroke-width="2"/><path d="M2673 438h4" stroke="#00ff00" stroke-width="2"/><path d="M2677 443h4" stroke="#00ff00" stroke-width="2"/><path d="M2685 379V458" stroke="#00ff00" stroke-width="2"/><path d="M2681 443h4" stroke="#00ff00" stroke-width="2"/><path d="M2685 398h4" stroke="#00ff00" stroke-width="2"/><path d="M2693 424V499" stroke="#00ff00" stroke-width="2"/><path d="M2689 425h4" stroke="#00ff00" stroke-width="2"/><path d="M2693 441h4" stroke="#00ff00" stroke-width="2"/><path d="M2701 486V509" stroke="#00ff00" stroke-width="2"/><path d="M2697 487h4" stroke="#00ff00" stroke-width="2"/><path d="M2701 490h4" stroke="#00ff00" stroke-width="2"/><path d="M2709 481V502" stroke="#00ff00" stroke-width="2"/><path d="M2705 490h4" stroke="#00ff00" stroke-width="2"/><path d="M2709 494h4" stroke="#00ff00" stroke-width="2"/><path d="M2717 500V695" stroke="#00ff00" stroke-width="2"/><path d="M2713 501h4" stroke="#00ff00" stroke-width="2"/><path d="M2717 545h4" stroke="#00ff00" stroke-width="2"/><path d="M2725 596V672" stroke="#00ff00" stroke-width="2"/><path d="M2721 597h4" stroke="#00ff00" stroke-width="2"/><path d="M2725 619h4" stroke="#00ff00" stroke-width="2"/><path d="M2733 546V631" stroke="#00ff00" stroke-width="2"/><path d="M2729 619h4" stroke="#00ff00" stroke-width="2"/><path d="M2733 579h4" stroke="#00ff00" stroke-width="2"/><path d="M2741 513V633" stroke="#00ff00" stroke-width="2"/><path d="M2737 579h4" stroke="#00ff00" stroke-width="2"/><path d="M2741 594h4" stroke="#00ff00" stroke-width="2"/><path d="M2749 543V575" stroke="#00ff00" stroke-width="2"/><path d="M2745 574h4" stroke="#00ff00" stroke-width="2"/><path d="M2749 549h4" stroke="#00ff00" stroke-width="2"/><path d="M2757 557V575" stroke="#00ff00" stroke-width="2"/><path d="M2753 558h4" stroke="#00ff00" stroke-width="2"/><path d="M2757 565h4" stroke="#00ff00" stroke-width="2"/><path d="M2765 550V598" stroke="#00ff00" stroke-width="2"/><path d="M2761 565h4" stroke="#00ff00" stroke-width="2"/><path d="M2765 573h4" stroke="#00ff00" stroke-width="2"/><path d="M2773 524V631" stroke="#00ff00" stroke-width="2"/><path d="M2769 573h4" stroke="#00ff00" stroke-width="2"/><path d="M2773 597h4" stroke="#00ff00" stroke-width="2"/><path d="M2781 539V626" stroke="#00ff00" stroke-width="2"/><path d="M2777 597h4" stroke="#00ff00" stroke-width="2"/><path d="M2781 595h4" stroke="#00ff00" stroke-width="2"/><path d="M2789 548V580" stroke="#00ff00" stroke-width="2"/><path d="M2785 579h4" stroke="#00ff00" stroke-width="2"/><path d="M2789 569h4" stroke="#00ff00" stroke-width="2"/><path d="M2797 536V577" stroke="#00ff00" stroke-width="2"/><path d="M2793 569h4" stroke="#00ff00" stroke-width="2"/><path d="M2797 549h4" stroke="#00ff00" stroke-width="2"/><path d="M2805 539V557" stroke="#00ff00" stroke-width="2"/><path d="M2801 549h4" stroke="#00ff00" stroke-width="2"/><path d="M2805 546h4" stroke="#00ff00" stroke-width="2"/><path d="M2813 468V557" stroke="#00ff00" stroke-width="2"/><path d="M2809 546h4" stroke="#00ff00" stroke-width="2"/><path d="M2813 501h4" stroke="#00ff00" stroke-width="2"/><path d="M2821 441V481" stroke="#00ff00" stroke-width="2"/><path d="M2817 480h4" stroke="#00ff00" stroke-width="2"/><path d="M2821 468h4" stroke="#00ff00" stroke-width="2"/><path d="M2829 456V566" stroke="#00ff00" stroke-width="2"/><path d="M2825 468h4" stroke="#00ff00" stroke-width="2"/><path d="M2829 535h4" stroke="#00ff00" stroke-width="2"/><path d="M2837 513V559" stroke="#00ff00" stroke-width="2"/><path d="M2833 535h4" stroke="#00ff00" stroke-width="2"/><path d="M2837 524h4" stroke="#00ff00" stroke-width="2"/><path d="M2845 508V611" stroke="#00ff00" stroke-width="2"/><path d="M2841 524h4" stroke="#00ff00" stroke-width="2"/><path d="M2845 535h4" stroke="#00ff00" stroke-width="2"/><path d="M2853 532V562" stroke="#00ff00" stroke-width="2"/><path d="M2849 535h4" stroke="#00ff00" stroke-width="2"/><path d="M2853 541h4" stroke="#00ff00" stroke-width="2"/><path d="M2861 554V630" stroke="#00ff00" stroke-width="2"/><path d="M2857 555h4" stroke="#00ff00" stroke-width="2"/><path d="M2861 576h4" stroke="#00ff00" stroke-width="2"/><path d="M2869 588V676" stroke="#00ff00" stroke-width="2"/><path d="M2865 589h4" stroke="#00ff00" stroke-width="2"/><path d="M2869 627h4" stroke="#00ff00" stroke-width="2"/><polyline points="2066,711 2094,691 2124,670 2151,668 2176,666 2197,662 2212,661 2229,654 2254,626 2286,601 2322,577 2356,575 2380,560 2395,562 2411,557 2438,557 2462,565 2480,574 2485,575 2531,575 2549,568 2565,553 2602,553 2627,539 2644,520 2669,511 2690,486 2708,475 2721,484 2740,495 2765,521 2779,532 2797,553 2809,559 2822,555 2836,542 2853,542 2868,550 2877,553" fill="none" stroke="#ff0000" stroke-width="1.8"/><path d="M1883 830V263H3265" stroke="#fff" stroke-width="2" fill="none"/><path d="M3264 262V831" stroke="#fff" stroke-width="2"/><path d="M1882 830H3265" stroke="#fff" stroke-width="2"/><path d="M1890 284h14l-7-8z" fill="#fff"/><path d="M2141 830v7" stroke="#fff" stroke-width="2"/><path d="M2269 830v7" stroke="#fff" stroke-width="2"/><path d="M2397 830v7" stroke="#fff" stroke-width="2"/><path d="M2525 830v7" stroke="#fff" stroke-width="2"/><path d="M2653 830v7" stroke="#fff" stroke-width="2"/><path d="M2781 830v7" stroke="#fff" stroke-width="2"/></svg>
<span class="t" style="top:270.3px;font-size:18.5px;line-height:18.5px;color:#fff;left:1913.7px;">GBPUSD,H4  1.33872 1.34155 1.33830 1.34014</span>
<span class="t" style="top:838.3px;font-size:18.5px;line-height:18.5px;color:#fff;transform:scaleX(1.008);transform-origin:0 0;left:2011.0px;">17 Nov 16:00</span>
<span class="t" style="top:838.3px;font-size:18.5px;line-height:18.5px;color:#fff;transform:scaleX(1.017);transform-origin:0 0;left:2139.0px;">19 Nov 08:00</span>
<span class="t" style="top:838.3px;font-size:18.5px;line-height:18.5px;color:#fff;transform:scaleX(1.022);transform-origin:0 0;left:2266.0px;">24 Nov 00:00</span>
<span class="t" style="top:838.3px;font-size:18.5px;line-height:18.5px;color:#fff;transform:scaleX(1.013);transform-origin:0 0;left:2394.5px;">26 Nov 16:00</span>
<span class="t" style="top:838.3px;font-size:18.5px;line-height:18.5px;color:#fff;transform:scaleX(0.982);transform-origin:0 0;left:2523.0px;">1 Dec 08:00</span>
<span class="t" style="top:838.3px;font-size:18.5px;line-height:18.5px;color:#fff;transform:scaleX(0.992);transform-origin:0 0;left:2650.0px;">4 Dec 00:00</span>
<span class="t" style="top:838.3px;font-size:18.5px;line-height:18.5px;color:#fff;transform:scaleX(0.992);transform-origin:0 0;left:2777.0px;">8 Dec 16:00</span>
<div style="left:1884px;top:290px;width:384px;height:104px;background:#000;"></div>
<div style="left:1890px;top:294px;width:88px;height:42px;background:linear-gradient(to bottom,#5858ff,#3a3af0 60%,#2a2ae0);border:2px solid #1010b8;border-bottom:none;"></div>
<div style="left:2177px;top:294px;width:88px;height:42px;background:linear-gradient(to bottom,#5858ff,#3a3af0 60%,#2a2ae0);border:2px solid #1010b8;border-bottom:none;"></div>
<div style="left:1890px;top:334px;width:186px;height:56px;background:linear-gradient(to bottom,#2c2ce0,#0c0cc0 70%,#0000b0);border:2px solid #1010b8;border-top:none;"></div>
<div style="left:2080px;top:334px;width:185px;height:56px;background:linear-gradient(to bottom,#2c2ce0,#0c0cc0 70%,#0000b0);border:2px solid #1010b8;border-top:none;"></div>
<div style="left:1892px;top:334px;width:86px;height:2px;background:#1010b8;opacity:0;"></div>
<div style="left:1898px;top:332px;width:70px;height:2px;background:#8c8cf8;"></div>
<div style="left:2185px;top:332px;width:70px;height:2px;background:#8c8cf8;"></div>
<span class="t" style="top:305.8px;font-size:21.5px;line-height:21.5px;color:#fff;transform:scaleX(0.801);transform-origin:0 0;left:1909.6px;">SELL</span>
<span class="t" style="top:305.8px;font-size:21.5px;line-height:21.5px;color:#fff;transform:scaleX(0.826);transform-origin:0 0;left:2199.5px;">BUY</span>
<div style="left:1984px;top:296px;width:32px;height:32px;background:#e4e4e4;box-shadow:inset -2px -2px 0 #c8c8c8;"></div>
<svg style="left:1993px;top:307.5px;" width="14" height="8" viewBox="0 0 14 8"><path d="M0 0H14L7 7Z" fill="#000"/></svg>
<div style="left:2018px;top:296px;width:118px;height:32px;background:#fff;"></div>
<span class="t" style="top:303.4px;font-size:22px;line-height:22px;color:#000;transform:scaleX(0.968);transform-origin:0 0;left:2085.0px;">1.00</span>
<div style="left:2138px;top:296px;width:32px;height:32px;background:#e4e4e4;box-shadow:inset -2px -2px 0 #c8c8c8;"></div>
<svg style="left:2147px;top:306.5px;" width="14" height="8" viewBox="0 0 14 8"><path d="M0 7H14L7 0Z" fill="#000"/></svg>
<span class="t" style="top:369.1px;font-size:20px;line-height:20px;color:#fff;font-weight:bold;transform:scaleX(1.242);transform-origin:0 0;left:1913.5px;">1.34</span>
<span class="t" style="top:329.8px;font-size:67px;line-height:67px;color:#fff;transform:scaleX(0.925);transform-origin:0 0;left:1971.5px;">01</span>
<span class="t" style="top:333.0px;font-size:22.5px;line-height:22.5px;color:#fff;font-weight:bold;transform:scaleX(0.985);transform-origin:0 0;left:2040.0px;">4</span>
<span class="t" style="top:369.1px;font-size:20px;line-height:20px;color:#fff;font-weight:bold;transform:scaleX(1.242);transform-origin:0 0;left:2101.5px;">1.34</span>
<span class="t" style="top:329.8px;font-size:67px;line-height:67px;color:#fff;transform:scaleX(0.925);transform-origin:0 0;left:2161.5px;">04</span>
<span class="t" style="top:333.0px;font-size:22.5px;line-height:22.5px;color:#fff;font-weight:bold;transform:scaleX(0.985);transform-origin:0 0;left:2228.0px;">6</span>
<svg style="left:0px;top:0px;" width="2880" height="1578" viewBox="0 0 2880 1578"><path d="M461 938V1503" stroke="#778899" stroke-width="2" stroke-dasharray="6 6" stroke-dashoffset="2"/><path d="M525 938V1503" stroke="#778899" stroke-width="2" stroke-dasharray="6 6" stroke-dashoffset="2"/><path d="M589 938V1503" stroke="#778899" stroke-width="2" stroke-dasharray="6 6" stroke-dashoffset="2"/><path d="M653 938V1503" stroke="#778899" stroke-width="2" stroke-dasharray="6 6" stroke-dashoffset="2"/><path d="M717 938V1503" stroke="#778899" stroke-width="2" stroke-dasharray="6 6" stroke-dashoffset="2"/><path d="M781 938V1503" stroke="#778899" stroke-width="2" stroke-dasharray="6 6" stroke-dashoffset="2"/><path d="M845 938V1503" stroke="#778899" stroke-width="2" stroke-dasharray="6 6" stroke-dashoffset="2"/><path d="M909 938V1503" stroke="#778899" stroke-width="2" stroke-dasharray="6 6" stroke-dashoffset="2"/><path d="M973 938V1503" stroke="#778899" stroke-width="2" stroke-dasharray="6 6" stroke-dashoffset="2"/><path d="M1037 938V1503" stroke="#778899" stroke-width="2" stroke-dasharray="6 6" stroke-dashoffset="2"/><path d="M1101 938V1503" stroke="#778899" stroke-width="2" stroke-dasharray="6 6" stroke-dashoffset="2"/><path d="M1165 938V1503" stroke="#778899" stroke-width="2" stroke-dasharray="6 6" stroke-dashoffset="2"/><path d="M1229 938V1503" stroke="#778899" stroke-width="2" stroke-dasharray="6 6" stroke-dashoffset="2"/><path d="M1293 938V1503" stroke="#778899" stroke-width="2" stroke-dasharray="6 6" stroke-dashoffset="2"/><path d="M1357 938V1503" stroke="#778899" stroke-width="2" stroke-dasharray="6 6" stroke-dashoffset="2"/><path d="M1421 938V1503" stroke="#778899" stroke-width="2" stroke-dasharray="6 6" stroke-dashoffset="2"/><path d="M1485 938V1503" stroke="#778899" stroke-width="2" stroke-dasharray="6 6" stroke-dashoffset="2"/><path d="M1549 938V1503" stroke="#778899" stroke-width="2" stroke-dasharray="6 6" stroke-dashoffset="2"/><path d="M1613 938V1503" stroke="#778899" stroke-width="2" stroke-dasharray="6 6" stroke-dashoffset="2"/><path d="M1677 938V1503" stroke="#778899" stroke-width="2" stroke-dasharray="6 6" stroke-dashoffset="2"/><path d="M1741 938V1503" stroke="#778899" stroke-width="2" stroke-dasharray="6 6" stroke-dashoffset="2"/><path d="M396 977H1775" stroke="#778899" stroke-width="2" stroke-dasharray="6 6" stroke-dashoffset="11"/><path d="M396 1043H1775" stroke="#778899" stroke-width="2" stroke-dasharray="6 6" stroke-dashoffset="11"/><path d="M396 1109H1775" stroke="#778899" stroke-width="2" stroke-dasharray="6 6" stroke-dashoffset="11"/><path d="M396 1175H1775" stroke="#778899" stroke-width="2" stroke-dasharray="6 6" stroke-dashoffset="11"/><path d="M396 1241H1775" stroke="#778899" stroke-width="2" stroke-dasharray="6 6" stroke-dashoffset="11"/><path d="M1101 1160V1184" stroke="#00ff00" stroke-width="2"/><path d="M1101 1166h4" stroke="#00ff00" stroke-width="2"/><path d="M1109 1160V1184" stroke="#00ff00" stroke-width="2"/><path d="M1109 1166h4" stroke="#00ff00" stroke-width="2"/><path d="M1117 1160V1186" stroke="#00ff00" stroke-width="2"/><path d="M1117 1166h4" stroke="#00ff00" stroke-width="2"/><path d="M1125 1177V1190" stroke="#00ff00" stroke-width="2"/><path d="M1133 1178V1202" stroke="#00ff00" stroke-width="2"/><path d="M1133 1184h4" stroke="#00ff00" stroke-width="2"/><path d="M1141 1183V1230" stroke="#00ff00" stroke-width="2"/><path d="M1141 1189h4" stroke="#00ff00" stroke-width="2"/><path d="M1149 1208V1230" stroke="#00ff00" stroke-width="2"/><path d="M1149 1214h4" stroke="#00ff00" stroke-width="2"/><path d="M1157 1202V1230" stroke="#00ff00" stroke-width="2"/><path d="M1157 1208h4" stroke="#00ff00" stroke-width="2"/><path d="M1165 1210V1230" stroke="#00ff00" stroke-width="2"/><path d="M1173 1212V1230" stroke="#00ff00" stroke-width="2"/><path d="M1181 1209V1230" stroke="#00ff00" stroke-width="2"/><path d="M1181 1215h4" stroke="#00ff00" stroke-width="2"/><path d="M1189 1208V1230" stroke="#00ff00" stroke-width="2"/><path d="M1189 1214h4" stroke="#00ff00" stroke-width="2"/><path d="M1197 1212V1230" stroke="#00ff00" stroke-width="2"/><path d="M1205 1210V1230" stroke="#00ff00" stroke-width="2"/><path d="M1213 1206V1230" stroke="#00ff00" stroke-width="2"/><path d="M1213 1212h4" stroke="#00ff00" stroke-width="2"/><path d="M1221 1214V1230" stroke="#00ff00" stroke-width="2"/><path d="M1229 1177V1230" stroke="#00ff00" stroke-width="2"/><path d="M1229 1183h4" stroke="#00ff00" stroke-width="2"/><path d="M1237 1188V1230" stroke="#00ff00" stroke-width="2"/><path d="M1237 1194h4" stroke="#00ff00" stroke-width="2"/><path d="M1253 1214V1230" stroke="#00ff00" stroke-width="2"/><path d="M1261 1212V1230" stroke="#00ff00" stroke-width="2"/><path d="M1269 1212V1230" stroke="#00ff00" stroke-width="2"/><path d="M1277 1210V1230" stroke="#00ff00" stroke-width="2"/><path d="M1341 1210V1230" stroke="#00ff00" stroke-width="2"/><path d="M1349 1214V1230" stroke="#00ff00" stroke-width="2"/><path d="M1717 1206V1230" stroke="#00ff00" stroke-width="2"/><path d="M1717 1212h4" stroke="#00ff00" stroke-width="2"/><path d="M397.5 956V969M413 959V963M420 961.5h2" stroke="#00ff00" stroke-width="2"/><path d="M395 1504V937H1777" stroke="#fff" stroke-width="2" fill="none"/><path d="M1776 936V1505" stroke="#fff" stroke-width="2"/><path d="M394 1504H1777" stroke="#fff" stroke-width="2"/><path d="M402 958h14l-7-8z" fill="#fff"/><path d="M1777 1175h6" stroke="#fff" stroke-width="2"/></svg>
<span class="t" style="top:944.3px;font-size:18.5px;line-height:18.5px;color:#fff;transform:scaleX(1.013);transform-origin:0 0;left:425.5px;">USDCHF,H4  0.88637 0.88703 0.88614 0.88671</span>
<span class="t" style="top:1166.3px;font-size:18.5px;line-height:18.5px;color:#fff;transform:scaleX(0.957);transform-origin:0 0;left:1786.0px;">0.89500</span>
<div style="left:396px;top:964px;width:384px;height:104px;background:#000;"></div>
<div style="left:402px;top:968px;width:88px;height:42px;background:linear-gradient(to bottom,#5858ff,#3a3af0 60%,#2a2ae0);border:2px solid #1010b8;border-bottom:none;"></div>
<div style="left:689px;top:968px;width:88px;height:42px;background:linear-gradient(to bottom,#5858ff,#3a3af0 60%,#2a2ae0);border:2px solid #1010b8;border-bottom:none;"></div>
<div style="left:402px;top:1008px;width:186px;height:56px;background:linear-gradient(to bottom,#2c2ce0,#0c0cc0 70%,#0000b0);border:2px solid #1010b8;border-top:none;"></div>
<div style="left:592px;top:1008px;width:185px;height:56px;background:linear-gradient(to bottom,#2c2ce0,#0c0cc0 70%,#0000b0);border:2px solid #1010b8;border-top:none;"></div>
<div style="left:404px;top:1008px;width:86px;height:2px;background:#1010b8;opacity:0;"></div>
<div style="left:410px;top:1006px;width:70px;height:2px;background:#8c8cf8;"></div>
<div style="left:697px;top:1006px;width:70px;height:2px;background:#8c8cf8;"></div>
<span class="t" style="top:979.8px;font-size:21.5px;line-height:21.5px;color:#fff;transform:scaleX(0.801);transform-origin:0 0;left:421.6px;">SELL</span>
<span class="t" style="top:979.8px;font-size:21.5px;line-height:21.5px;color:#fff;transform:scaleX(0.826);transform-origin:0 0;left:711.5px;">BUY</span>
<div style="left:496px;top:970px;width:32px;height:32px;background:#e4e4e4;box-shadow:inset -2px -2px 0 #c8c8c8;"></div>
<svg style="left:505px;top:981.5px;" width="14" height="8" viewBox="0 0 14 8"><path d="M0 0H14L7 7Z" fill="#000"/></svg>
<div style="left:530px;top:970px;width:118px;height:32px;background:#fff;"></div>
<span class="t" style="top:977.4px;font-size:22px;line-height:22px;color:#000;transform:scaleX(0.968);transform-origin:0 0;left:597.0px;">1.00</span>
<div style="left:650px;top:970px;width:32px;height:32px;background:#e4e4e4;box-shadow:inset -2px -2px 0 #c8c8c8;"></div>
<svg style="left:659px;top:980.5px;" width="14" height="8" viewBox="0 0 14 8"><path d="M0 7H14L7 0Z" fill="#000"/></svg>
<span class="t" style="top:1043.1px;font-size:20px;line-height:20px;color:#fff;font-weight:bold;transform:scaleX(1.242);transform-origin:0 0;left:425.5px;">0.88</span>
<span class="t" style="top:1003.8px;font-size:67px;line-height:67px;color:#fff;transform:scaleX(0.925);transform-origin:0 0;left:483.5px;">67</span>
<span class="t" style="top:1007.0px;font-size:22.5px;line-height:22.5px;color:#fff;font-weight:bold;transform:scaleX(0.985);transform-origin:0 0;left:552.0px;">1</span>
<span class="t" style="top:1043.1px;font-size:20px;line-height:20px;color:#fff;font-weight:bold;transform:scaleX(1.242);transform-origin:0 0;left:613.5px;">0.88</span>
<span class="t" style="top:1003.8px;font-size:67px;line-height:67px;color:#fff;transform:scaleX(0.925);transform-origin:0 0;left:673.5px;">70</span>
<span class="t" style="top:1007.0px;font-size:22.5px;line-height:22.5px;color:#fff;font-weight:bold;transform:scaleX(0.985);transform-origin:0 0;left:740.0px;">6</span>
<svg style="left:0px;top:0px;" width="2880" height="1578" viewBox="0 0 2880 1578"><path d="M1949 938V1503" stroke="#778899" stroke-width="2" stroke-dasharray="6 6" stroke-dashoffset="2"/><path d="M2013 938V1503" stroke="#778899" stroke-width="2" stroke-dasharray="6 6" stroke-dashoffset="2"/><path d="M2077 938V1503" stroke="#778899" stroke-width="2" stroke-dasharray="6 6" stroke-dashoffset="2"/><path d="M2141 938V1503" stroke="#778899" stroke-width="2" stroke-dasharray="6 6" stroke-dashoffset="2"/><path d="M2205 938V1503" stroke="#778899" stroke-width="2" stroke-dasharray="6 6" stroke-dashoffset="2"/><path d="M2269 938V1503" stroke="#778899" stroke-width="2" stroke-dasharray="6 6" stroke-dashoffset="2"/><path d="M2333 938V1503" stroke="#778899" stroke-width="2" stroke-dasharray="6 6" stroke-dashoffset="2"/><path d="M2397 938V1503" stroke="#778899" stroke-width="2" stroke-dasharray="6 6" stroke-dashoffset="2"/><path d="M2461 938V1503" stroke="#778899" stroke-width="2" stroke-dasharray="6 6" stroke-dashoffset="2"/><path d="M2525 938V1503" stroke="#778899" stroke-width="2" stroke-dasharray="6 6" stroke-dashoffset="2"/><path d="M2589 938V1503" stroke="#778899" stroke-width="2" stroke-dasharray="6 6" stroke-dashoffset="2"/><path d="M2653 938V1503" stroke="#778899" stroke-width="2" stroke-dasharray="6 6" stroke-dashoffset="2"/><path d="M2717 938V1503" stroke="#778899" stroke-width="2" stroke-dasharray="6 6" stroke-dashoffset="2"/><path d="M2781 938V1503" stroke="#778899" stroke-width="2" stroke-dasharray="6 6" stroke-dashoffset="2"/><path d="M2845 938V1503" stroke="#778899" stroke-width="2" stroke-dasharray="6 6" stroke-dashoffset="2"/><path d="M2909 938V1503" stroke="#778899" stroke-width="2" stroke-dasharray="6 6" stroke-dashoffset="2"/><path d="M2973 938V1503" stroke="#778899" stroke-width="2" stroke-dasharray="6 6" stroke-dashoffset="2"/><path d="M3037 938V1503" stroke="#778899" stroke-width="2" stroke-dasharray="6 6" stroke-dashoffset="2"/><path d="M3101 938V1503" stroke="#778899" stroke-width="2" stroke-dasharray="6 6" stroke-dashoffset="2"/><path d="M3165 938V1503" stroke="#778899" stroke-width="2" stroke-dasharray="6 6" stroke-dashoffset="2"/><path d="M3229 938V1503" stroke="#778899" stroke-width="2" stroke-dasharray="6 6" stroke-dashoffset="2"/><path d="M1884 977H3263" stroke="#778899" stroke-width="2" stroke-dasharray="6 6" stroke-dashoffset="11"/><path d="M1884 1043H3263" stroke="#778899" stroke-width="2" stroke-dasharray="6 6" stroke-dashoffset="11"/><path d="M1884 1109H3263" stroke="#778899" stroke-width="2" stroke-dasharray="6 6" stroke-dashoffset="11"/><path d="M1884 1175H3263" stroke="#778899" stroke-width="2" stroke-dasharray="6 6" stroke-dashoffset="11"/><path d="M1884 1241H3263" stroke="#778899" stroke-width="2" stroke-dasharray="6 6" stroke-dashoffset="11"/><path d="M1884 1201H2880" stroke="#778899" stroke-width="2"/><path d="M2077 1087V1128" stroke="#00ff00" stroke-width="2"/><rect x="2071" y="1100" width="12" height="3" fill="#00ff00"/><path d="M2093 1074V1129" stroke="#00ff00" stroke-width="2"/><rect x="2088" y="1093" width="10" height="11" fill="#000" stroke="#00ff00" stroke-width="2"/><path d="M2109 1068V1115" stroke="#00ff00" stroke-width="2"/><rect x="2104" y="1075" width="10" height="18" fill="#000" stroke="#00ff00" stroke-width="2"/><path d="M2125 1068V1084" stroke="#00ff00" stroke-width="2"/><rect x="2120" y="1063" width="10" height="12" fill="#000" stroke="#00ff00" stroke-width="2"/><path d="M2141 1068V1097" stroke="#00ff00" stroke-width="2"/><rect x="2136" y="1071" width="10" height="18" fill="#fff" stroke="#00ff00" stroke-width="2"/><path d="M2157 1078V1108" stroke="#00ff00" stroke-width="2"/><rect x="2152" y="1081" width="10" height="8" fill="#000" stroke="#00ff00" stroke-width="2"/><path d="M2173 1068V1084" stroke="#00ff00" stroke-width="2"/><rect x="2168" y="1063" width="10" height="18" fill="#000" stroke="#00ff00" stroke-width="2"/><path d="M2189 1068V1091" stroke="#00ff00" stroke-width="2"/><rect x="2184" y="1063" width="10" height="26" fill="#fff" stroke="#00ff00" stroke-width="2"/><path d="M2205 1072V1111" stroke="#00ff00" stroke-width="2"/><rect x="2200" y="1089" width="10" height="10" fill="#fff" stroke="#00ff00" stroke-width="2"/><path d="M2221 1082V1105" stroke="#00ff00" stroke-width="2"/><rect x="2216" y="1086" width="10" height="13" fill="#000" stroke="#00ff00" stroke-width="2"/><path d="M2237 1078V1105" stroke="#00ff00" stroke-width="2"/><rect x="2231" y="1084" width="12" height="3" fill="#00ff00"/><path d="M2253 1081V1094" stroke="#00ff00" stroke-width="2"/><rect x="2247" y="1085" width="12" height="3" fill="#00ff00"/><path d="M2269 1068V1105" stroke="#00ff00" stroke-width="2"/><rect x="2264" y="1087" width="10" height="10" fill="#fff" stroke="#00ff00" stroke-width="2"/><path d="M2285 1063V1103" stroke="#00ff00" stroke-width="2"/><rect x="2280" y="1077" width="10" height="20" fill="#000" stroke="#00ff00" stroke-width="2"/><path d="M2301 1058V1091" stroke="#00ff00" stroke-width="2"/><rect x="2296" y="1073" width="10" height="4" fill="#000" stroke="#00ff00" stroke-width="2"/><path d="M2317 1063V1076" stroke="#00ff00" stroke-width="2"/><rect x="2312" y="1067" width="10" height="7" fill="#000" stroke="#00ff00" stroke-width="2"/><path d="M2333 1063V1077" stroke="#00ff00" stroke-width="2"/><rect x="2327" y="1066" width="12" height="3" fill="#00ff00"/><path d="M2349 1064V1075" stroke="#00ff00" stroke-width="2"/><rect x="2344" y="1067" width="10" height="4" fill="#000" stroke="#00ff00" stroke-width="2"/><path d="M2365 1049V1085" stroke="#00ff00" stroke-width="2"/><rect x="2360" y="1067" width="10" height="14" fill="#fff" stroke="#00ff00" stroke-width="2"/><path d="M2381 1066V1087" stroke="#00ff00" stroke-width="2"/><rect x="2376" y="1068" width="10" height="12" fill="#000" stroke="#00ff00" stroke-width="2"/><path d="M2397 1020V1072" stroke="#00ff00" stroke-width="2"/><rect x="2392" y="1033" width="10" height="37" fill="#000" stroke="#00ff00" stroke-width="2"/><path d="M2413 1030V1061" stroke="#00ff00" stroke-width="2"/><rect x="2408" y="1033" width="10" height="24" fill="#fff" stroke="#00ff00" stroke-width="2"/><path d="M2429 1039V1084" stroke="#00ff00" stroke-width="2"/><rect x="2424" y="1045" width="10" height="12" fill="#000" stroke="#00ff00" stroke-width="2"/><path d="M2445 1002V1045" stroke="#00ff00" stroke-width="2"/><rect x="2440" y="1019" width="10" height="26" fill="#000" stroke="#00ff00" stroke-width="2"/><path d="M2461 991V1020" stroke="#00ff00" stroke-width="2"/><rect x="2456" y="1011" width="10" height="7" fill="#000" stroke="#00ff00" stroke-width="2"/><path d="M2477 992V1037" stroke="#00ff00" stroke-width="2"/><rect x="2472" y="1011" width="10" height="16" fill="#fff" stroke="#00ff00" stroke-width="2"/><path d="M2493 1017V1058" stroke="#00ff00" stroke-width="2"/><rect x="2488" y="1028" width="10" height="12" fill="#fff" stroke="#00ff00" stroke-width="2"/><path d="M2509 1035V1066" stroke="#00ff00" stroke-width="2"/><rect x="2504" y="1040" width="10" height="16" fill="#fff" stroke="#00ff00" stroke-width="2"/><path d="M2525 1046V1108" stroke="#00ff00" stroke-width="2"/><rect x="2520" y="1051" width="10" height="46" fill="#fff" stroke="#00ff00" stroke-width="2"/><path d="M2541 1084V1107" stroke="#00ff00" stroke-width="2"/><rect x="2535" y="1093" width="12" height="3" fill="#00ff00"/><path d="M2557 1068V1097" stroke="#00ff00" stroke-width="2"/><rect x="2552" y="1091" width="10" height="4" fill="#000" stroke="#00ff00" stroke-width="2"/><path d="M2573 1067V1105" stroke="#00ff00" stroke-width="2"/><rect x="2568" y="1087" width="10" height="4" fill="#000" stroke="#00ff00" stroke-width="2"/><path d="M2589 1082V1129" stroke="#00ff00" stroke-width="2"/><rect x="2584" y="1087" width="10" height="24" fill="#fff" stroke="#00ff00" stroke-width="2"/><path d="M2605 1084V1113" stroke="#00ff00" stroke-width="2"/><rect x="2600" y="1089" width="10" height="22" fill="#000" stroke="#00ff00" stroke-width="2"/><path d="M2621 1084V1125" stroke="#00ff00" stroke-width="2"/><rect x="2616" y="1095" width="10" height="9" fill="#000" stroke="#00ff00" stroke-width="2"/><path d="M2637 1084V1105" stroke="#00ff00" stroke-width="2"/><rect x="2632" y="1091" width="10" height="3" fill="#000" stroke="#00ff00" stroke-width="2"/><path d="M2653 1087V1144" stroke="#00ff00" stroke-width="2"/><rect x="2648" y="1089" width="10" height="52" fill="#fff" stroke="#00ff00" stroke-width="2"/><path d="M2669 1131V1179" stroke="#00ff00" stroke-width="2"/><rect x="2664" y="1141" width="10" height="37" fill="#fff" stroke="#00ff00" stroke-width="2"/><path d="M2685 1076V1186" stroke="#00ff00" stroke-width="2"/><rect x="2680" y="1095" width="10" height="82" fill="#000" stroke="#00ff00" stroke-width="2"/><path d="M2701 1078V1097" stroke="#00ff00" stroke-width="2"/><rect x="2696" y="1091" width="10" height="4" fill="#000" stroke="#00ff00" stroke-width="2"/><path d="M2717 1070V1099" stroke="#00ff00" stroke-width="2"/><rect x="2712" y="1081" width="10" height="10" fill="#000" stroke="#00ff00" stroke-width="2"/><path d="M2733 1067V1089" stroke="#00ff00" stroke-width="2"/><rect x="2728" y="1081" width="10" height="3" fill="#fff" stroke="#00ff00" stroke-width="2"/><path d="M2749 1070V1092" stroke="#00ff00" stroke-width="2"/><rect x="2744" y="1085" width="10" height="4" fill="#fff" stroke="#00ff00" stroke-width="2"/><path d="M2765 1085V1140" stroke="#00ff00" stroke-width="2"/><rect x="2760" y="1089" width="10" height="51" fill="#fff" stroke="#00ff00" stroke-width="2"/><path d="M2781 1118V1156" stroke="#00ff00" stroke-width="2"/><rect x="2776" y="1139" width="10" height="6" fill="#fff" stroke="#00ff00" stroke-width="2"/><path d="M2797 1137V1167" stroke="#00ff00" stroke-width="2"/><rect x="2792" y="1145" width="10" height="14" fill="#fff" stroke="#00ff00" stroke-width="2"/><path d="M2813 1146V1175" stroke="#00ff00" stroke-width="2"/><rect x="2807" y="1158" width="12" height="3" fill="#00ff00"/><path d="M2829 1160V1203" stroke="#00ff00" stroke-width="2"/><rect x="2824" y="1160" width="10" height="28" fill="#fff" stroke="#00ff00" stroke-width="2"/><path d="M2845 1169V1217" stroke="#00ff00" stroke-width="2"/><rect x="2840" y="1188" width="10" height="29" fill="#fff" stroke="#00ff00" stroke-width="2"/><path d="M2861 1185V1217" stroke="#00ff00" stroke-width="2"/><rect x="2856" y="1188" width="10" height="29" fill="#000" stroke="#00ff00" stroke-width="2"/><path d="M2877 1164V1190" stroke="#00ff00" stroke-width="2"/><rect x="2872" y="1165" width="10" height="24" fill="#000" stroke="#00ff00" stroke-width="2"/><path d="M1883 1504V937H3265" stroke="#fff" stroke-width="2" fill="none"/><path d="M3264 936V1505" stroke="#fff" stroke-width="2"/><path d="M1882 1504H3265" stroke="#fff" stroke-width="2"/><path d="M1890 958h14l-7-8z" fill="#fff"/></svg>
<span class="t" style="top:944.3px;font-size:18.5px;line-height:18.5px;color:#fff;transform:scaleX(1.005);transform-origin:0 0;left:1913.5px;">USDJPY,H4  103.450 103.458 103.384 103.418</span>
<div style="left:1884px;top:964px;width:384px;height:104px;background:#000;"></div>
<div style="left:1890px;top:968px;width:88px;height:42px;background:linear-gradient(to bottom,#5858ff,#3a3af0 60%,#2a2ae0);border:2px solid #1010b8;border-bottom:none;"></div>
<div style="left:2177px;top:968px;width:88px;height:42px;background:linear-gradient(to bottom,#5858ff,#3a3af0 60%,#2a2ae0);border:2px solid #1010b8;border-bottom:none;"></div>
<div style="left:1890px;top:1008px;width:186px;height:56px;background:linear-gradient(to bottom,#2c2ce0,#0c0cc0 70%,#0000b0);border:2px solid #1010b8;border-top:none;"></div>
<div style="left:2080px;top:1008px;width:185px;height:56px;background:linear-gradient(to bottom,#2c2ce0,#0c0cc0 70%,#0000b0);border:2px solid #1010b8;border-top:none;"></div>
<div style="left:1892px;top:1008px;width:86px;height:2px;background:#1010b8;opacity:0;"></div>
<div style="left:1898px;top:1006px;width:70px;height:2px;background:#8c8cf8;"></div>
<div style="left:2185px;top:1006px;width:70px;height:2px;background:#8c8cf8;"></div>
<span class="t" style="top:979.8px;font-size:21.5px;line-height:21.5px;color:#fff;transform:scaleX(0.801);transform-origin:0 0;left:1909.6px;">SELL</span>
<span class="t" style="top:979.8px;font-size:21.5px;line-height:21.5px;color:#fff;transform:scaleX(0.826);transform-origin:0 0;left:2199.5px;">BUY</span>
<div style="left:1984px;top:970px;width:32px;height:32px;background:#e4e4e4;box-shadow:inset -2px -2px 0 #c8c8c8;"></div>
<svg style="left:1993px;top:981.5px;" width="14" height="8" viewBox="0 0 14 8"><path d="M0 0H14L7 7Z" fill="#000"/></svg>
<div style="left:2018px;top:970px;width:118px;height:32px;background:#fff;"></div>
<span class="t" style="top:977.4px;font-size:22px;line-height:22px;color:#000;transform:scaleX(0.968);transform-origin:0 0;left:2085.0px;">1.00</span>
<div style="left:2138px;top:970px;width:32px;height:32px;background:#e4e4e4;box-shadow:inset -2px -2px 0 #c8c8c8;"></div>
<svg style="left:2147px;top:980.5px;" width="14" height="8" viewBox="0 0 14 8"><path d="M0 7H14L7 0Z" fill="#000"/></svg>
<span class="t" style="top:1043.1px;font-size:20px;line-height:20px;color:#fff;font-weight:bold;transform:scaleX(1.242);transform-origin:0 0;left:1920.3px;">103</span>
<span class="t" style="top:1003.8px;font-size:67px;line-height:67px;color:#fff;transform:scaleX(0.925);transform-origin:0 0;left:1971.5px;">41</span>
<span class="t" style="top:1007.0px;font-size:22.5px;line-height:22.5px;color:#fff;font-weight:bold;transform:scaleX(0.985);transform-origin:0 0;left:2040.0px;">8</span>
<span class="t" style="top:1043.1px;font-size:20px;line-height:20px;color:#fff;font-weight:bold;transform:scaleX(1.242);transform-origin:0 0;left:2108.3px;">103</span>
<span class="t" style="top:1003.8px;font-size:67px;line-height:67px;color:#fff;transform:scaleX(0.925);transform-origin:0 0;left:2161.5px;">44</span>
<span class="t" style="top:1007.0px;font-size:22.5px;line-height:22.5px;color:#fff;font-weight:bold;transform:scaleX(0.985);transform-origin:0 0;left:2228.0px;">4</span>
</div></div>
<div style="left:2876px;top:207px;width:4px;height:1009px;background:#e5e5e5;"></div>
<div style="left:374px;top:1216px;width:2506px;height:4px;background:#fff;"></div>
<div style="left:374px;top:1220px;width:2506px;height:38px;background:#e5e5e5;"></div>
<div style="left:374px;top:1220px;width:2502px;height:2px;background:#000;"></div>
<div style="left:376px;top:1220px;width:10px;height:37px;background:#e5e5e5;border-left:2px solid #000;border-right:2px solid #000;border-top:2px solid #000;"></div>
<div style="left:386px;top:1220px;width:160px;height:37px;background:#fff;border:2px solid #000;border-top:none;box-shadow:2px 2px 0 #808080;"></div>
<span class="t" style="top:1226.9px;font-size:22px;line-height:22px;color:#000;transform:scaleX(0.885);transform-origin:0 0;left:407.5px;">EURUSD,H4</span>
<span class="t" style="top:1226.9px;font-size:22px;line-height:22px;color:#404040;transform:scaleX(0.916);transform-origin:0 0;left:567.0px;">USDCHF,H4</span>
<span class="t" style="top:1226.9px;font-size:22px;line-height:22px;color:#404040;transform:scaleX(0.869);transform-origin:0 0;left:729.5px;">GBPUSD,H4</span>
<span class="t" style="top:1226.9px;font-size:22px;line-height:22px;color:#404040;transform:scaleX(0.903);transform-origin:0 0;left:887.0px;">USDJPY,H4</span>
<div style="left:706px;top:1226px;width:2px;height:27px;background:#404040;"></div>
<div style="left:866px;top:1226px;width:2px;height:27px;background:#404040;"></div>
<div style="left:1021px;top:1226px;width:2px;height:27px;background:#404040;"></div>
<svg style="left:2812px;top:1231px;" width="14" height="14" viewBox="0 0 14 14"><path d="M10 1v12L2 7z" fill="#9a9a9a"/></svg>
<svg style="left:2850px;top:1231px;" width="14" height="14" viewBox="0 0 14 14"><path d="M4 1v12l8-6z" fill="#9a9a9a"/></svg>
<svg style="left:11px;top:1275px;" width="10" height="10" viewBox="0 0 10 10"><path d="M1 1l8 8M9 1L1 9" stroke="#000" stroke-width="2.2"/></svg>
<div style="left:2px;top:1296px;width:26px;height:229px;background:linear-gradient(to bottom,#a6caf0,#0a246a);"></div>
<span class="t" style="left:2px;top:1523px;font-size:22px;line-height:26px;color:#fff;letter-spacing:1.3px;transform-origin:0 0;transform:rotate(-90deg);">Терминал</span>
<div style="left:30px;top:1268px;width:2846px;height:219px;background:#808080;"></div>
<div style="left:32px;top:1270px;width:2842px;height:215px;background:#c0c0c0;"></div>
<div style="left:32px;top:1300px;width:2808px;height:5px;background:#fff;"></div>
<div style="left:32px;top:1270px;width:317px;height:32px;background:#e5e5e5;box-shadow:inset -2px -2px 0 #808080;"></div>
<div style="left:351px;top:1270px;width:2489px;height:32px;background:#e5e5e5;box-shadow:inset 2px 0 0 #fff, inset -2px -2px 0 #808080;"></div>
<span class="t" style="top:1276.4px;font-size:22px;line-height:22px;color:#000;transform:scaleX(0.936);transform-origin:0 0;left:43.0px;">Время</span>
<span class="t" style="top:1276.4px;font-size:22px;line-height:22px;color:#000;transform:scaleX(0.967);transform-origin:0 0;left:363.0px;">Сообщение</span>
<div style="left:31px;top:1303px;width:2809px;height:182px;overflow:hidden;">
<div style="left:-31px;top:-1303px;width:2880px;height:1578px;">
<div style="left:32px;top:1305px;width:316px;height:38px;background:#ebebeb;"></div>
<div style="left:350px;top:1305px;width:2490px;height:38px;background:#ebebeb;"></div>
<div style="left:44.5px;top:1316px;width:13px;height:13px;background:radial-gradient(circle at 40% 35%,#d0d0d0,#8a8a8a);border-radius:50%;"></div>
<span class="t" style="top:1315.9px;font-size:22px;line-height:22px;color:#000;transform:scaleX(1.025);transform-origin:0 0;left:75.0px;">2020.12.22 08:11:55.827</span>
<span class="t" style="top:1315.9px;font-size:22px;line-height:22px;color:#000;transform:scaleX(0.994);transform-origin:0 0;left:359.0px;">'108602': previous successful authorization performed from 78.155.47.11</span>
<div style="left:32px;top:1345px;width:316px;height:38px;background:#fff;"></div>
<div style="left:350px;top:1345px;width:2490px;height:38px;background:#fff;"></div>
<div style="left:44.5px;top:1356px;width:13px;height:13px;background:radial-gradient(circle at 40% 35%,#d0d0d0,#8a8a8a);border-radius:50%;"></div>
<span class="t" style="top:1355.9px;font-size:22px;line-height:22px;color:#000;transform:scaleX(1.025);transform-origin:0 0;left:75.0px;">2020.12.22 08:11:55.691</span>
<span class="t" style="top:1355.9px;font-size:22px;line-height:22px;color:#000;transform:scaleX(0.986);transform-origin:0 0;left:359.0px;">'108602': login datacenter on AMarkets-Real through DC6 (ping: 47.61 ms)</span>
<div style="left:32px;top:1385px;width:316px;height:38px;background:#ebebeb;"></div>
<div style="left:350px;top:1385px;width:2490px;height:38px;background:#ebebeb;"></div>
<div style="left:44.5px;top:1396px;width:13px;height:13px;background:radial-gradient(circle at 40% 35%,#d0d0d0,#8a8a8a);border-radius:50%;"></div>
<span class="t" style="top:1395.9px;font-size:22px;line-height:22px;color:#000;transform:scaleX(1.025);transform-origin:0 0;left:75.0px;">2020.12.22 08:11:55.251</span>
<span class="t" style="top:1395.9px;font-size:22px;line-height:22px;color:#000;transform:scaleX(0.980);transform-origin:0 0;left:359.0px;">'108602': login on AMarkets-Real through DC6 (ping: 47.61 ms)</span>
<div style="left:32px;top:1425px;width:316px;height:38px;background:#fff;"></div>
<div style="left:350px;top:1425px;width:2490px;height:38px;background:#fff;"></div>
<div style="left:44.5px;top:1436px;width:13px;height:13px;background:radial-gradient(circle at 40% 35%,#d0d0d0,#8a8a8a);border-radius:50%;"></div>
<span class="t" style="top:1435.9px;font-size:22px;line-height:22px;color:#000;transform:scaleX(1.025);transform-origin:0 0;left:75.0px;">2020.12.22 08:11:50.219</span>
<span class="t" style="top:1435.9px;font-size:22px;line-height:22px;color:#000;transform:scaleX(0.982);transform-origin:0 0;left:359.0px;">Data Folder: c:\Program Files\MetaTrader 4</span>
<div style="left:32px;top:1465px;width:316px;height:38px;background:#ebebeb;"></div>
<div style="left:350px;top:1465px;width:2490px;height:38px;background:#ebebeb;"></div>
<div style="left:44.5px;top:1476px;width:13px;height:13px;background:radial-gradient(circle at 40% 35%,#d0d0d0,#8a8a8a);border-radius:50%;"></div>
<span class="t" style="top:1475.9px;font-size:22px;line-height:22px;color:#000;transform:scaleX(1.025);transform-origin:0 0;left:75.0px;">2020.12.22 08:11:50.219</span>
<span class="t" style="top:1475.9px;font-size:22px;line-height:22px;color:#000;transform:scaleX(0.979);transform-origin:0 0;left:359.0px;">Microsoft Windows 7 x86, IE 11, 4 x Intel Core i5-7360U  @ 2.30GHz, Memory: 2929 / 12288 Mb, Disk: 77 / 233 Gb, GMT+1</span>
</div></div>
<div style="left:2841px;top:1269px;width:31px;height:216px;background:#f3f3f3;"></div>
<div style="left:2841px;top:1269px;width:31px;height:32px;background:#e5e5e5;box-shadow:inset 2px 2px 0 #fff, inset -2px -2px 0 #404040, inset -4px -4px 0 #808080;"></div>
<svg style="left:2849.5px;top:1280.5px;" width="14" height="8" viewBox="0 0 14 8"><path d="M0 7H14L7 0Z" fill="#000"/></svg>
<div style="left:2841px;top:1453px;width:31px;height:32px;background:#e5e5e5;box-shadow:inset 2px 2px 0 #fff, inset -2px -2px 0 #404040, inset -4px -4px 0 #808080;"></div>
<svg style="left:2849.5px;top:1465.5px;" width="14" height="8" viewBox="0 0 14 8"><path d="M0 0H14L7 7Z" fill="#000"/></svg>
<div style="left:2841px;top:1301px;width:31px;height:99px;background:#e5e5e5;box-shadow:inset 2px 2px 0 #fff, inset -2px -2px 0 #404040, inset -4px -4px 0 #808080;"></div>
<div style="left:29px;top:1485px;width:2847px;height:2px;background:#000;"></div>
<span class="t" style="top:1490.9px;font-size:22px;line-height:22px;color:#404040;transform:scaleX(1.007);transform-origin:0 0;left:56.2px;">Торговля</span>
<span class="t" style="top:1490.9px;font-size:22px;line-height:22px;color:#404040;transform:scaleX(0.975);transform-origin:0 0;left:190.0px;">Активы</span>
<span class="t" style="top:1490.9px;font-size:22px;line-height:22px;color:#404040;transform:scaleX(0.961);transform-origin:0 0;left:303.8px;">История Счета</span>
<span class="t" style="top:1490.9px;font-size:22px;line-height:22px;color:#404040;transform:scaleX(0.954);transform-origin:0 0;left:491.2px;">Новости</span>
<span class="t" style="top:1490.9px;font-size:22px;line-height:22px;color:#404040;transform:scaleX(0.981);transform-origin:0 0;left:637.0px;">Алерты</span>
<span class="t" style="top:1490.9px;font-size:22px;line-height:22px;color:#404040;transform:scaleX(0.958);transform-origin:0 0;left:753.0px;">Почта</span>
<span class="t" style="top:1490.9px;font-size:22px;line-height:22px;color:#404040;transform:scaleX(0.960);transform-origin:0 0;left:867.5px;">Маркет</span>
<span class="t" style="top:1490.9px;font-size:22px;line-height:22px;color:#404040;transform:scaleX(0.981);transform-origin:0 0;left:979.0px;">Сигналы</span>
<span class="t" style="top:1490.9px;font-size:22px;line-height:22px;color:#404040;transform:scaleX(0.979);transform-origin:0 0;left:1106.8px;">Статьи</span>
<span class="t" style="top:1490.9px;font-size:22px;line-height:22px;color:#404040;transform:scaleX(0.961);transform-origin:0 0;left:1217.0px;">Библиотека</span>
<span class="t" style="top:1490.9px;font-size:22px;line-height:22px;color:#404040;transform:scaleX(0.965);transform-origin:0 0;left:1373.0px;">Эксперты</span>
<div style="left:170px;top:1490px;width:2px;height:27px;background:#404040;"></div>
<div style="left:284px;top:1490px;width:2px;height:27px;background:#404040;"></div>
<div style="left:472px;top:1490px;width:2px;height:27px;background:#404040;"></div>
<div style="left:618px;top:1490px;width:2px;height:27px;background:#404040;"></div>
<div style="left:733px;top:1490px;width:2px;height:27px;background:#404040;"></div>
<div style="left:848px;top:1490px;width:2px;height:27px;background:#404040;"></div>
<div style="left:959px;top:1490px;width:2px;height:27px;background:#404040;"></div>
<div style="left:1087px;top:1490px;width:2px;height:27px;background:#404040;"></div>
<div style="left:1197px;top:1490px;width:2px;height:27px;background:#404040;"></div>
<div style="left:1353px;top:1490px;width:2px;height:27px;background:#404040;"></div>
<span class="t" style="top:1500.1px;font-size:17px;line-height:17px;color:#ff0000;transform:scaleX(1.060);transform-origin:0 0;left:578.8px;">67</span>
<span class="t" style="top:1500.1px;font-size:17px;line-height:17px;color:#ff0000;transform:scaleX(0.848);transform-origin:0 0;left:818.0px;">7</span>
<div style="left:1490px;top:1485px;width:120px;height:37px;background:#fff;border:2px solid #000;border-top:none;"></div>
<span class="t" style="top:1490.9px;font-size:22px;line-height:22px;color:#000;transform:scaleX(0.984);transform-origin:0 0;left:1510.0px;">Журнал</span>
<div style="left:2878px;top:208px;width:2px;height:1323px;background:#fff;"></div>
<div style="left:558px;top:416px;width:1506px;height:753px;border-radius:20px;overflow:hidden;background:#e6e6e6;">
<div style="left:-558px;top:-416px;width:2880px;height:1578px;">
<div style="left:558px;top:416px;width:1506px;height:57px;background:#2b292b;border:2px solid #59575b;border-bottom:none;border-radius:20px 20px 0 0;"></div>
<div style="left:558px;top:472px;width:1506px;height:1px;background:#141214;"></div>
<div style="left:574px;top:432px;width:24px;height:24px;background:#4d4b4d;border-radius:50%;"></div>
<div style="left:614px;top:432px;width:24px;height:24px;background:#4d4b4d;border-radius:50%;"></div>
<div style="left:654px;top:432px;width:24px;height:24px;background:#4d4b4d;border-radius:50%;"></div>
<span class="t" style="top:430.5px;font-size:26px;line-height:26px;color:#706e70;font-weight:bold;transform:scaleX(1.033);transform-origin:0 0;left:1267.0px;">Ордер</span>
<div style="left:574px;top:498px;width:598px;height:654px;background:#fff;border-top:2px solid #808080;border-left:2px solid #808080;border-right:2px solid #fff;border-bottom:2px solid #fff;box-shadow:inset 2px 2px 0 #404040;"></div>
<svg style="left:0px;top:0px;" width="2880" height="1578" viewBox="0 0 2880 1578"><path d="M649 508V1145" stroke="#c0c0c0" stroke-width="2" stroke-dasharray="7 6"/><path d="M713 508V1145" stroke="#c0c0c0" stroke-width="2" stroke-dasharray="7 6"/><path d="M777 508V1145" stroke="#c0c0c0" stroke-width="2" stroke-dasharray="7 6"/><path d="M841 508V1145" stroke="#c0c0c0" stroke-width="2" stroke-dasharray="7 6"/><path d="M905 508V1145" stroke="#c0c0c0" stroke-width="2" stroke-dasharray="7 6"/><path d="M969 508V1145" stroke="#c0c0c0" stroke-width="2" stroke-dasharray="7 6"/><path d="M1033 508V1145" stroke="#c0c0c0" stroke-width="2" stroke-dasharray="7 6"/><path d="M584 567H1083" stroke="#c0c0c0" stroke-width="2" stroke-dasharray="7 6"/><path d="M584 631H1083" stroke="#c0c0c0" stroke-width="2" stroke-dasharray="7 6"/><path d="M584 695H1083" stroke="#c0c0c0" stroke-width="2" stroke-dasharray="7 6"/><path d="M584 759H1083" stroke="#c0c0c0" stroke-width="2" stroke-dasharray="7 6"/><path d="M584 823H1083" stroke="#c0c0c0" stroke-width="2" stroke-dasharray="7 6"/><path d="M584 887H1083" stroke="#c0c0c0" stroke-width="2" stroke-dasharray="7 6"/><path d="M584 951H1083" stroke="#c0c0c0" stroke-width="2" stroke-dasharray="7 6"/><path d="M584 1015H1083" stroke="#c0c0c0" stroke-width="2" stroke-dasharray="7 6"/><path d="M584 1079H1083" stroke="#c0c0c0" stroke-width="2" stroke-dasharray="7 6"/><path d="M1084 567h6" stroke="#000" stroke-width="2"/><path d="M1084 631h6" stroke="#000" stroke-width="2"/><path d="M1084 695h6" stroke="#000" stroke-width="2"/><path d="M1084 759h6" stroke="#000" stroke-width="2"/><path d="M1084 823h6" stroke="#000" stroke-width="2"/><path d="M1084 887h6" stroke="#000" stroke-width="2"/><path d="M1084 951h6" stroke="#000" stroke-width="2"/><path d="M1084 1015h6" stroke="#000" stroke-width="2"/><path d="M1084 1079h6" stroke="#000" stroke-width="2"/><path d="M1084 1143h6" stroke="#000" stroke-width="2"/><polyline points="584,917 587,923 591,898 594,887 595,754 597,560 600,566 604,547 606,566 612,588 617,632 620,677 624,654 631,624 635,654 640,690 645,665 651,699 658,740 664,693 669,726 673,710 678,638 685,682 689,710 698,782 702,776 707,795 714,754 720,718 723,754 728,768 734,737 740,665 746,693 750,740 756,715 761,726 768,754 775,710 783,649 790,599 796,616 802,665 808,643 815,605 820,552 823,560 826,547 830,560 833,547 837,560 840,547 844,566 850,621 854,665 858,649 860,665 1082,665" fill="none" stroke="#fa5f5f" stroke-width="2.2"/><polyline points="584,1108 590,1097 594,1069 595,1080 597,754 604,746 606,754 612,787 617,820 621,873 626,837 632,807 635,837 640,884 645,848 651,887 658,925 663,887 668,925 673,892 678,820 685,870 689,898 698,970 700,950 707,978 714,939 721,887 725,937 730,953 735,920 740,848 746,876 750,925 756,887 761,909 768,939 775,892 783,831 790,782 796,807 803,859 808,826 815,787 820,743 825,754 828,743 833,754 839,729 844,760 850,804 854,848 856,831 860,847 1082,847" fill="none" stroke="#0a64f5" stroke-width="2.2"/><rect x="583" y="507" width="501" height="639" fill="none" stroke="#000" stroke-width="2"/></svg>
<span class="t" style="top:512.8px;font-size:18.5px;line-height:18.5px;color:#000;transform:scaleX(0.977);transform-origin:0 0;left:588.0px;">EURUSD</span>
<span class="t" style="top:558.3px;font-size:18.5px;line-height:18.5px;color:#000;transform:scaleX(0.954);transform-origin:0 0;left:1094.8px;">1.22233</span>
<span class="t" style="top:622.3px;font-size:18.5px;line-height:18.5px;color:#000;transform:scaleX(0.954);transform-origin:0 0;left:1094.8px;">1.22228</span>
<span class="t" style="top:686.3px;font-size:18.5px;line-height:18.5px;color:#000;transform:scaleX(0.954);transform-origin:0 0;left:1094.8px;">1.22223</span>
<span class="t" style="top:750.3px;font-size:18.5px;line-height:18.5px;color:#000;transform:scaleX(0.954);transform-origin:0 0;left:1094.8px;">1.22219</span>
<span class="t" style="top:814.3px;font-size:18.5px;line-height:18.5px;color:#000;transform:scaleX(0.954);transform-origin:0 0;left:1094.8px;">1.22214</span>
<span class="t" style="top:878.3px;font-size:18.5px;line-height:18.5px;color:#000;transform:scaleX(0.954);transform-origin:0 0;left:1094.8px;">1.22209</span>
<span class="t" style="top:942.3px;font-size:18.5px;line-height:18.5px;color:#000;transform:scaleX(0.954);transform-origin:0 0;left:1094.8px;">1.22204</span>
<span class="t" style="top:1006.3px;font-size:18.5px;line-height:18.5px;color:#000;transform:scaleX(0.954);transform-origin:0 0;left:1094.8px;">1.22199</span>
<span class="t" style="top:1070.3px;font-size:18.5px;line-height:18.5px;color:#000;transform:scaleX(0.954);transform-origin:0 0;left:1094.8px;">1.22194</span>
<span class="t" style="top:1128.3px;font-size:18.5px;line-height:18.5px;color:#000;transform:scaleX(0.954);transform-origin:0 0;left:1094.8px;">1.22189</span>
<div style="left:1088px;top:654px;width:78px;height:22px;background:#fa5f5f;"></div>
<span class="t" style="top:656.3px;font-size:18.5px;line-height:18.5px;color:#fff;transform:scaleX(0.954);transform-origin:0 0;left:1094.8px;">1.22226</span>
<div style="left:1088px;top:837px;width:78px;height:22px;background:#0a64f5;"></div>
<span class="t" style="top:839.3px;font-size:18.5px;line-height:18.5px;color:#fff;transform:scaleX(0.954);transform-origin:0 0;left:1094.8px;">1.22212</span>
<span class="t" style="top:507.9px;font-size:22px;line-height:22px;color:#000;transform:scaleX(0.962);transform-origin:0 0;left:1287.7px;">Символ:</span>
<div style="left:1384px;top:498px;width:646px;height:41px;background:#fff;border-top:2px solid #808080;border-left:2px solid #808080;border-right:2px solid #fff;border-bottom:2px solid #fff;box-shadow:inset 2px 2px 0 #404040;"></div>
<div style="left:1996px;top:502px;width:31px;height:34px;background:#e6e6e6;box-shadow:inset 2px 2px 0 #fff, inset -2px -2px 0 #404040, inset -4px -4px 0 #808080;"></div>
<svg style="left:2004.5px;top:516.0px;" width="14" height="8" viewBox="0 0 14 8"><path d="M0 0H14L7 7Z" fill="#000"/></svg>
<span class="t" style="top:509.9px;font-size:22px;line-height:22px;color:#000;transform:scaleX(0.920);transform-origin:0 0;left:1390.7px;">EURUSD, Euro vs US Dollar</span>
<span class="t" style="top:560.4px;font-size:22px;line-height:22px;color:#000;transform:scaleX(0.958);transform-origin:0 0;left:1293.2px;">Объем:</span>
<div style="left:1384px;top:550px;width:208px;height:41px;background:#fff;border-top:2px solid #808080;border-left:2px solid #808080;border-right:2px solid #fff;border-bottom:2px solid #fff;box-shadow:inset 2px 2px 0 #404040;"></div>
<div style="left:1558px;top:554px;width:31px;height:34px;background:#e6e6e6;box-shadow:inset 2px 2px 0 #fff, inset -2px -2px 0 #404040, inset -4px -4px 0 #808080;"></div>
<svg style="left:1566.5px;top:568.0px;" width="14" height="8" viewBox="0 0 14 8"><path d="M0 0H14L7 7Z" fill="#000"/></svg>
<span class="t" style="top:559.4px;font-size:22px;line-height:22px;color:#000;transform:scaleX(0.937);transform-origin:0 0;left:1396.5px;">1.00</span>
<span class="t" style="top:611.9px;font-size:22px;line-height:22px;color:#000;transform:scaleX(0.965);transform-origin:0 0;left:1256.7px;">Стоп Лосс:</span>
<div style="left:1384px;top:602px;width:204px;height:40px;background:#fff;border-top:2px solid #808080;border-left:2px solid #808080;border-right:2px solid #fff;border-bottom:2px solid #fff;box-shadow:inset 2px 2px 0 #404040;"></div>
<div style="left:1562px;top:606px;width:23px;height:16px;background:#e6e6e6;box-shadow:inset 2px 2px 0 #fff, inset -2px -2px 0 #404040, inset -4px -4px 0 #808080;"></div>
<div style="left:1562px;top:622px;width:23px;height:17px;background:#e6e6e6;box-shadow:inset 2px 2px 0 #fff, inset -2px -2px 0 #404040, inset -4px -4px 0 #808080;"></div>
<svg style="left:1568.5px;top:611.5px;" width="10" height="6" viewBox="0 0 10 6"><path d="M0 5H10L5 0Z" fill="#000"/></svg>
<svg style="left:1568.5px;top:627.5px;" width="10" height="6" viewBox="0 0 10 6"><path d="M0 0H10L5 5Z" fill="#000"/></svg>
<span class="t" style="top:611.4px;font-size:22px;line-height:22px;color:#000;transform:scaleX(0.977);transform-origin:0 0;left:1471.0px;">0.00000</span>
<span class="t" style="top:611.9px;font-size:22px;line-height:22px;color:#000;transform:scaleX(0.957);transform-origin:0 0;left:1658.0px;">Тейк Профит:</span>
<div style="left:1818px;top:602px;width:204px;height:40px;background:#fff;border-top:2px solid #808080;border-left:2px solid #808080;border-right:2px solid #fff;border-bottom:2px solid #fff;box-shadow:inset 2px 2px 0 #404040;"></div>
<div style="left:1996px;top:606px;width:23px;height:16px;background:#e6e6e6;box-shadow:inset 2px 2px 0 #fff, inset -2px -2px 0 #404040, inset -4px -4px 0 #808080;"></div>
<div style="left:1996px;top:622px;width:23px;height:17px;background:#e6e6e6;box-shadow:inset 2px 2px 0 #fff, inset -2px -2px 0 #404040, inset -4px -4px 0 #808080;"></div>
<svg style="left:2002.5px;top:611.5px;" width="10" height="6" viewBox="0 0 10 6"><path d="M0 5H10L5 0Z" fill="#000"/></svg>
<svg style="left:2002.5px;top:627.5px;" width="10" height="6" viewBox="0 0 10 6"><path d="M0 0H10L5 5Z" fill="#000"/></svg>
<span class="t" style="top:611.4px;font-size:22px;line-height:22px;color:#000;transform:scaleX(0.968);transform-origin:0 0;left:1905.3px;">0.00000</span>
<span class="t" style="top:664.4px;font-size:22px;line-height:22px;color:#000;transform:scaleX(0.979);transform-origin:0 0;left:1220.2px;">Комментарий:</span>
<div style="left:1384px;top:654px;width:646px;height:39px;background:#fff;border-top:2px solid #808080;border-left:2px solid #808080;border-right:2px solid #fff;border-bottom:2px solid #fff;box-shadow:inset 2px 2px 0 #404040;"></div>
<span class="t" style="top:716.4px;font-size:22px;line-height:22px;color:#000;transform:scaleX(0.982);transform-origin:0 0;left:1324.2px;">Тип:</span>
<div style="left:1384px;top:706px;width:646px;height:41px;background:#fff;border-top:2px solid #808080;border-left:2px solid #808080;border-right:2px solid #fff;border-bottom:2px solid #fff;box-shadow:inset 2px 2px 0 #404040;"></div>
<div style="left:1996px;top:710px;width:31px;height:34px;background:#e6e6e6;box-shadow:inset 2px 2px 0 #fff, inset -2px -2px 0 #404040, inset -4px -4px 0 #808080;"></div>
<svg style="left:2004.5px;top:724.0px;" width="14" height="8" viewBox="0 0 14 8"><path d="M0 0H14L7 7Z" fill="#000"/></svg>
<span class="t" style="top:717.4px;font-size:22px;line-height:22px;color:#000;transform:scaleX(0.966);transform-origin:0 0;left:1390.7px;">Немедленное исполнение</span>
<div style="left:1188px;top:775px;width:855px;height:377px;border:2px solid #808080;box-shadow:inset 2px 2px 0 #fff, 2px 2px 0 #fff;"></div>
<div style="left:1199px;top:762px;width:268px;height:28px;background:#e6e6e6;"></div>
<span class="t" style="top:766.9px;font-size:22px;line-height:22px;color:#000;transform:scaleX(0.965);transform-origin:0 0;left:1203.0px;">Немедленное исполнение</span>
<span class="t" style="top:831.7px;font-size:47px;line-height:47px;color:#000;transform:scaleX(0.989);transform-origin:0 0;left:1417.3px;">1.2221</span>
<span class="t" style="top:841.9px;font-size:35px;line-height:35px;color:#000;transform:scaleX(1.030);transform-origin:0 0;left:1567.0px;">2</span>
<span class="t" style="top:831.7px;font-size:47px;line-height:47px;color:#000;transform:scaleX(1.292);transform-origin:0 0;left:1606.0px;">/</span>
<span class="t" style="top:831.7px;font-size:47px;line-height:47px;color:#000;transform:scaleX(0.978);transform-origin:0 0;left:1645.4px;">1.2222</span>
<span class="t" style="top:841.9px;font-size:35px;line-height:35px;color:#000;transform:scaleX(0.942);transform-origin:0 0;left:1793.2px;">6</span>
<div style="left:1218px;top:910px;width:376px;height:46px;background:#ff8080;box-shadow:inset 2px 2px 0 #ffb0b0, inset -2px -2px 0 #c04848, inset -4px -4px 0 #e06868;"></div>
<span class="t" style="top:923.9px;font-size:22px;line-height:22px;color:#000;transform:scaleX(0.866);transform-origin:0 0;left:1389.2px;">Sell</span>
<div style="left:1638px;top:910px;width:376px;height:46px;background:#a0c0ff;box-shadow:inset 2px 2px 0 #d8f4ff, inset -2px -2px 0 #6878d8, inset -4px -4px 0 #88a4f0;"></div>
<span class="t" style="top:923.9px;font-size:22px;line-height:22px;color:#000;transform:scaleX(0.925);transform-origin:0 0;left:1806.7px;">Buy</span>
<div style="left:1218px;top:968px;width:796px;height:45px;background:#f1f1b7;border-top:2px solid #fff;border-left:2px solid #fff;border-right:2px solid #404040;border-bottom:3px solid #404040;"></div>
<div style="left:1218px;top:1042px;width:25px;height:25px;background:#fff;border-top:2px solid #808080;border-left:2px solid #808080;border-right:2px solid #fff;border-bottom:2px solid #fff;box-shadow:inset 2px 2px 0 #404040;"></div>
<span class="t" style="top:1045.4px;font-size:22px;line-height:22px;color:#000;transform:scaleX(0.983);transform-origin:0 0;left:1251.2px;">Использовать максимальное отклонение от запрошенной цены</span>
<span class="t" style="top:1099.4px;font-size:22px;line-height:22px;color:#000;transform:scaleX(0.968);transform-origin:0 0;left:1345.4px;">Максимальное отклонение:</span>
<div style="left:1644px;top:1090px;width:118px;height:40px;background:#e6e6e6;border-top:2px solid #808080;border-left:2px solid #808080;border-right:2px solid #fff;border-bottom:2px solid #fff;box-shadow:inset 2px 2px 0 #404040;"></div>
<div style="left:1728px;top:1094px;width:31px;height:33px;background:#e6e6e6;box-shadow:inset 2px 2px 0 #fff, inset -2px -2px 0 #404040, inset -4px -4px 0 #808080;"></div>
<svg style="left:1736.5px;top:1107.5px;" width="14" height="8" viewBox="0 0 14 8"><path d="M0 0H14L7 7Z" fill="#808080"/></svg>
<span class="t" style="top:1100.9px;font-size:22px;line-height:22px;color:#9a9a9a;transform:scaleX(0.901);transform-origin:0 0;left:1655.6px;">0</span>
<span class="t" style="top:1099.4px;font-size:22px;line-height:22px;color:#000;transform:scaleX(1.008);transform-origin:0 0;left:1773.0px;">пунктов</span>
</div></div>
</div></body></html>
